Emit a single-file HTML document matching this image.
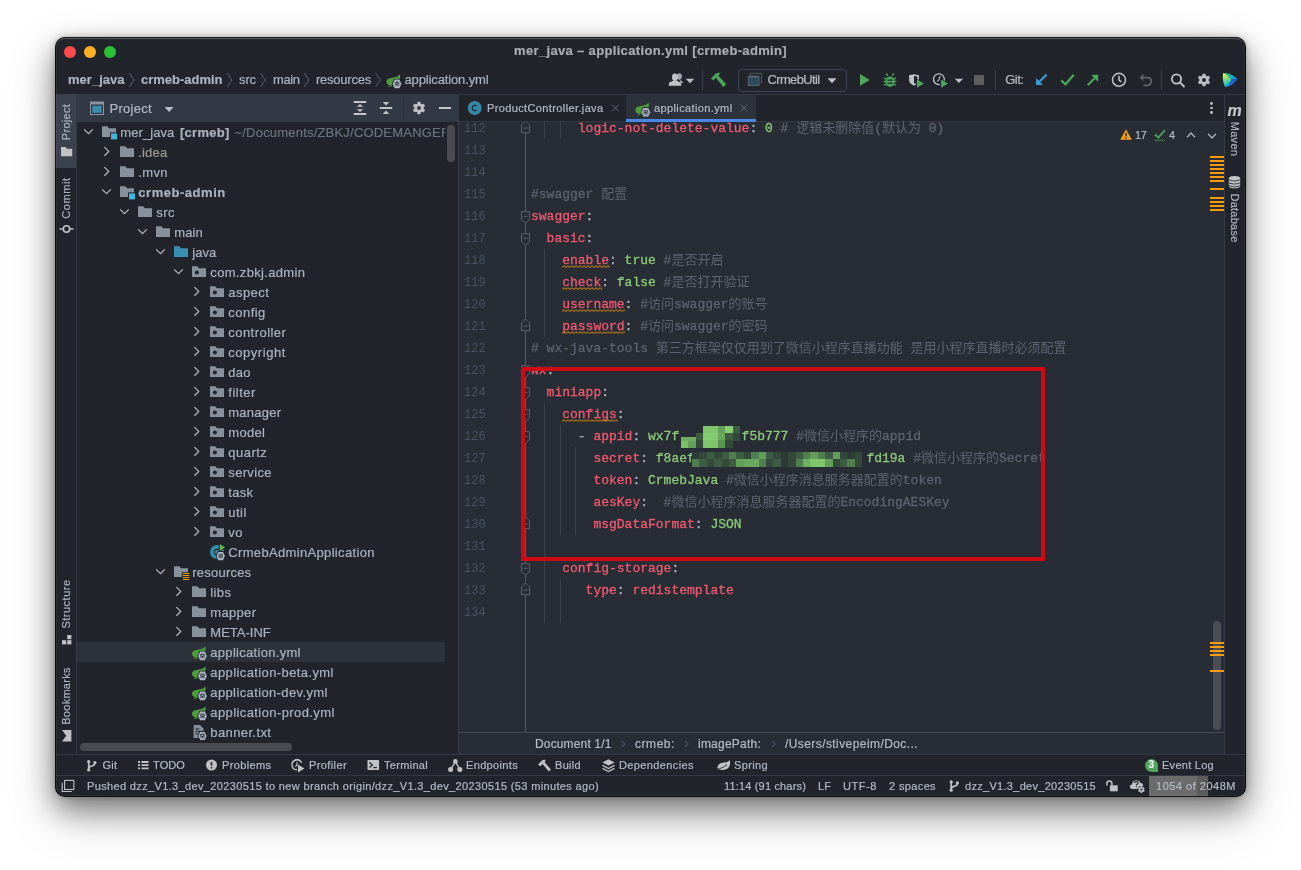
<!DOCTYPE html>
<html lang="zh"><head><meta charset="utf-8"><title>mer_java – application.yml [crmeb-admin]</title>
<style>
html,body{margin:0;padding:0;background:#fff;}
body{width:1301px;height:870px;overflow:hidden;position:relative;font-family:"Liberation Sans", "Noto Sans CJK SC", sans-serif;font-size:13px;}
.a{position:absolute;display:block;}
.t{white-space:pre;-webkit-text-stroke:0.2px currentColor;}
.m{font-family:"Liberation Mono", "Noto Sans CJK SC", monospace;-webkit-text-stroke:0.3px currentColor;}
#w{position:absolute;left:55px;top:37px;width:1190.5px;height:760px;border-radius:10px;overflow:hidden;background:#21252b;}
#sh{position:absolute;left:55px;top:37px;width:1190.5px;height:760px;border-radius:10px;box-shadow:0 0 6px rgba(0,0,0,.25),0 12px 28px rgba(0,0,0,.42),0 20px 50px rgba(0,0,0,.22);}
#o{position:absolute;left:-55px;top:-37px;width:1301px;height:870px;will-change:transform;}
#hl{position:absolute;left:55px;top:37px;width:1190.5px;height:760px;border-radius:10px;box-shadow:inset 0 0 0 1px rgba(0,0,0,.75), inset 0 2px 0 0 rgba(255,255,255,.2), inset 0 0 0 2px rgba(255,255,255,.05);pointer-events:none;}
</style></head><body>
<div id="sh"></div>
<div id="w"><div id="o">
<div class="a" style="left:64px;top:46px;width:12px;height:12px;background:#fd4a4a;border-radius:50%;"></div>
<div class="a" style="left:84px;top:46px;width:12px;height:12px;background:#fdb124;border-radius:50%;"></div>
<div class="a" style="left:104px;top:46px;width:12px;height:12px;background:#2ac034;border-radius:50%;"></div>
<span id="t1" class="a t" style="left:650.5px;top:42.20px;font-size:13px;line-height:18px;color:#a9acb2;font-weight:bold;letter-spacing:0.341px;transform:translateX(-50%);">mer_java – application.yml [crmeb-admin]</span>
<span id="t2" class="a t" style="left:68px;top:70.70px;font-size:13px;line-height:18px;color:#abb2bf;font-weight:bold;letter-spacing:0.014px;">mer_java</span>
<span id="t3" class="a t" style="left:141px;top:70.70px;font-size:13px;line-height:18px;color:#abb2bf;font-weight:bold;letter-spacing:-0.013px;">crmeb-admin</span>
<span id="t4" class="a t" style="left:239px;top:70.70px;font-size:13px;line-height:18px;color:#abb2bf;letter-spacing:-0.115px;">src</span>
<span id="t5" class="a t" style="left:273px;top:70.70px;font-size:13px;line-height:18px;color:#abb2bf;letter-spacing:-0.422px;">main</span>
<span id="t6" class="a t" style="left:316px;top:70.70px;font-size:13px;line-height:18px;color:#abb2bf;letter-spacing:-0.231px;">resources</span>
<span id="t7" class="a t" style="left:404.5px;top:70.70px;font-size:13px;line-height:18px;color:#abb2bf;letter-spacing:-0.133px;">application.yml</span>
<svg class="a" style="left:128px;top:72px;" width="8" height="17" viewBox="0.00 0.00 8 17"><path d="M1.2 1 L5.8 8 L1.2 15" fill="none" stroke="#5a6170" stroke-width="1"/></svg>
<svg class="a" style="left:226px;top:72px;" width="8" height="17" viewBox="0.00 0.00 8 17"><path d="M1.2 1 L5.8 8 L1.2 15" fill="none" stroke="#5a6170" stroke-width="1"/></svg>
<svg class="a" style="left:259px;top:72px;" width="8" height="17" viewBox="-0.50 0.00 8 17"><path d="M1.2 1 L5.8 8 L1.2 15" fill="none" stroke="#5a6170" stroke-width="1"/></svg>
<svg class="a" style="left:303px;top:72px;" width="8" height="17" viewBox="0.00 0.00 8 17"><path d="M1.2 1 L5.8 8 L1.2 15" fill="none" stroke="#5a6170" stroke-width="1"/></svg>
<svg class="a" style="left:374px;top:72px;" width="8" height="17" viewBox="-0.50 0.00 8 17"><path d="M1.2 1 L5.8 8 L1.2 15" fill="none" stroke="#5a6170" stroke-width="1"/></svg>
<div class="a" style="left:55px;top:94px;width:1190px;height:1px;background:#333842;"></div>
<div class="a" style="left:55px;top:94px;width:21px;height:74.2px;background:#3b414d;"></div>
<div class="a" style="left:76px;top:122px;width:1px;height:632px;background:#343944;"></div>
<span id="t8" class="a t" style="left:65.7px;top:114.00px;font-size:11px;line-height:16px;color:#abb2bf;letter-spacing:0.321px;transform:translate(-50%,0) rotate(-90deg);transform-origin:50% 50%;">Project</span>
<span id="t9" class="a t" style="left:65.7px;top:190.00px;font-size:11px;line-height:16px;color:#abb2bf;letter-spacing:0.602px;transform:translate(-50%,0) rotate(-90deg);transform-origin:50% 50%;">Commit</span>
<span id="t10" class="a t" style="left:65.7px;top:596.00px;font-size:11px;line-height:16px;color:#abb2bf;letter-spacing:0.484px;transform:translate(-50%,0) rotate(-90deg);transform-origin:50% 50%;">Structure</span>
<span id="t11" class="a t" style="left:65.7px;top:687.50px;font-size:11px;line-height:16px;color:#abb2bf;letter-spacing:0.274px;transform:translate(-50%,0) rotate(-90deg);transform-origin:50% 50%;">Bookmarks</span>
<div class="a" style="left:76px;top:94px;width:383px;height:28px;background:#323844;"></div>
<span id="t12" class="a t" style="left:109.5px;top:99.70px;font-size:13px;line-height:18px;color:#b4bac5;letter-spacing:0.290px;">Project</span>
<svg class="a" style="left:164px;top:107px;" width="10" height="6" viewBox="-0.60 0.00 10 6"><path d="M0 0 H9 L4.5 5 Z" fill="#bcbfc5"/></svg>
<svg class="a" style="left:83px;top:128px;" width="11" height="8" viewBox="-0.50 -0.40 11 8"><path d="M0.7 1 L5 5.3 L9.3 1" fill="none" stroke="#b0b4bb" stroke-width="1.3"/></svg>
<svg class="a" style="left:101px;top:123px;" width="17" height="17" viewBox="0.00 -0.40 17 17"><path d="M1 2.8 H6.4 L7.9 4.8 H15 V13.5 H1 Z" fill="#87909b"/><rect x="9" y="9" width="7" height="7" fill="#21252b"/><rect x="10" y="10" width="6" height="6" fill="#40b6e0"/></svg>
<span id="t13" class="a t" style="left:120.3px;top:123.70px;font-size:13px;line-height:18px;color:#abb2bf;letter-spacing:0.066px;">mer_java</span>
<span id="t14" class="a t" style="left:180.0px;top:123.70px;font-size:13px;line-height:18px;color:#abb2bf;font-weight:bold;letter-spacing:0.259px;">[crmeb]</span>
<span id="t15" class="a t" style="left:234.5px;top:123.70px;font-size:13px;line-height:18px;color:#6b727f;letter-spacing:0.201px;">~/Documents/ZBKJ/CODEMANGER</span>
<svg class="a" style="left:103px;top:146px;" width="9" height="12" viewBox="-0.10 -0.10 9 12"><path d="M1.3 1 L5.6 5.3 L1.3 9.6" fill="none" stroke="#b0b4bb" stroke-width="1.3"/></svg>
<svg class="a" style="left:119px;top:143px;" width="17" height="17" viewBox="0.00 -0.40 17 17"><path d="M1 2.8 H6.4 L7.9 4.8 H15 V13.5 H1 Z" fill="#87909b"/></svg>
<span id="t16" class="a t" style="left:138.3px;top:143.70px;font-size:13px;line-height:18px;color:#9a9a94;letter-spacing:0.159px;">.idea</span>
<svg class="a" style="left:103px;top:166px;" width="9" height="12" viewBox="-0.10 -0.10 9 12"><path d="M1.3 1 L5.6 5.3 L1.3 9.6" fill="none" stroke="#b0b4bb" stroke-width="1.3"/></svg>
<svg class="a" style="left:119px;top:163px;" width="17" height="17" viewBox="0.00 -0.40 17 17"><path d="M1 2.8 H6.4 L7.9 4.8 H15 V13.5 H1 Z" fill="#87909b"/></svg>
<span id="t17" class="a t" style="left:138.3px;top:163.70px;font-size:13px;line-height:18px;color:#abb2bf;letter-spacing:0.332px;">.mvn</span>
<svg class="a" style="left:101px;top:188px;" width="11" height="8" viewBox="-0.50 -0.40 11 8"><path d="M0.7 1 L5 5.3 L9.3 1" fill="none" stroke="#b0b4bb" stroke-width="1.3"/></svg>
<svg class="a" style="left:119px;top:183px;" width="17" height="17" viewBox="0.00 -0.40 17 17"><path d="M1 2.8 H6.4 L7.9 4.8 H15 V13.5 H1 Z" fill="#87909b"/><rect x="9" y="9" width="7" height="7" fill="#21252b"/><rect x="10" y="10" width="6" height="6" fill="#40b6e0"/></svg>
<span id="t18" class="a t" style="left:138.3px;top:183.70px;font-size:13px;line-height:18px;color:#abb2bf;font-weight:bold;letter-spacing:0.533px;">crmeb-admin</span>
<svg class="a" style="left:119px;top:208px;" width="11" height="8" viewBox="-0.50 -0.40 11 8"><path d="M0.7 1 L5 5.3 L9.3 1" fill="none" stroke="#b0b4bb" stroke-width="1.3"/></svg>
<svg class="a" style="left:137px;top:203px;" width="17" height="17" viewBox="0.00 -0.40 17 17"><path d="M1 2.8 H6.4 L7.9 4.8 H15 V13.5 H1 Z" fill="#87909b"/></svg>
<span id="t19" class="a t" style="left:156.3px;top:203.70px;font-size:13px;line-height:18px;color:#abb2bf;letter-spacing:0.385px;">src</span>
<svg class="a" style="left:137px;top:228px;" width="11" height="8" viewBox="-0.50 -0.40 11 8"><path d="M0.7 1 L5 5.3 L9.3 1" fill="none" stroke="#b0b4bb" stroke-width="1.3"/></svg>
<svg class="a" style="left:155px;top:223px;" width="17" height="17" viewBox="0.00 -0.40 17 17"><path d="M1 2.8 H6.4 L7.9 4.8 H15 V13.5 H1 Z" fill="#87909b"/></svg>
<span id="t20" class="a t" style="left:174.3px;top:223.70px;font-size:13px;line-height:18px;color:#abb2bf;letter-spacing:0.078px;">main</span>
<svg class="a" style="left:155px;top:248px;" width="11" height="8" viewBox="-0.50 -0.40 11 8"><path d="M0.7 1 L5 5.3 L9.3 1" fill="none" stroke="#b0b4bb" stroke-width="1.3"/></svg>
<svg class="a" style="left:173px;top:243px;" width="17" height="17" viewBox="0.00 -0.40 17 17"><path d="M1 2.8 H6.4 L7.9 4.8 H15 V13.5 H1 Z" fill="#3a8fb0"/></svg>
<span id="t21" class="a t" style="left:192.3px;top:243.70px;font-size:13px;line-height:18px;color:#abb2bf;letter-spacing:0.035px;">java</span>
<svg class="a" style="left:173px;top:268px;" width="11" height="8" viewBox="-0.50 -0.40 11 8"><path d="M0.7 1 L5 5.3 L9.3 1" fill="none" stroke="#b0b4bb" stroke-width="1.3"/></svg>
<svg class="a" style="left:191px;top:263px;" width="17" height="17" viewBox="0.00 -0.40 17 17"><path d="M1 2.8 H6.4 L7.9 4.8 H15 V13.5 H1 Z" fill="#87909b"/><circle cx="5.9" cy="9" r="2" fill="#21252b"/></svg>
<span id="t22" class="a t" style="left:210.3px;top:263.70px;font-size:13px;line-height:18px;color:#abb2bf;letter-spacing:0.335px;">com.zbkj.admin</span>
<svg class="a" style="left:193px;top:286px;" width="9" height="12" viewBox="-0.10 -0.10 9 12"><path d="M1.3 1 L5.6 5.3 L1.3 9.6" fill="none" stroke="#b0b4bb" stroke-width="1.3"/></svg>
<svg class="a" style="left:209px;top:283px;" width="17" height="17" viewBox="0.00 -0.40 17 17"><path d="M1 2.8 H6.4 L7.9 4.8 H15 V13.5 H1 Z" fill="#87909b"/><circle cx="5.9" cy="9" r="2" fill="#21252b"/></svg>
<span id="t23" class="a t" style="left:228.3px;top:283.70px;font-size:13px;line-height:18px;color:#abb2bf;letter-spacing:0.448px;">aspect</span>
<svg class="a" style="left:193px;top:306px;" width="9" height="12" viewBox="-0.10 -0.10 9 12"><path d="M1.3 1 L5.6 5.3 L1.3 9.6" fill="none" stroke="#b0b4bb" stroke-width="1.3"/></svg>
<svg class="a" style="left:209px;top:303px;" width="17" height="17" viewBox="0.00 -0.40 17 17"><path d="M1 2.8 H6.4 L7.9 4.8 H15 V13.5 H1 Z" fill="#87909b"/><circle cx="5.9" cy="9" r="2" fill="#21252b"/></svg>
<span id="t24" class="a t" style="left:228.3px;top:303.70px;font-size:13px;line-height:18px;color:#abb2bf;letter-spacing:0.466px;">config</span>
<svg class="a" style="left:193px;top:326px;" width="9" height="12" viewBox="-0.10 -0.10 9 12"><path d="M1.3 1 L5.6 5.3 L1.3 9.6" fill="none" stroke="#b0b4bb" stroke-width="1.3"/></svg>
<svg class="a" style="left:209px;top:323px;" width="17" height="17" viewBox="0.00 -0.40 17 17"><path d="M1 2.8 H6.4 L7.9 4.8 H15 V13.5 H1 Z" fill="#87909b"/><circle cx="5.9" cy="9" r="2" fill="#21252b"/></svg>
<span id="t25" class="a t" style="left:228.3px;top:323.70px;font-size:13px;line-height:18px;color:#abb2bf;letter-spacing:0.453px;">controller</span>
<svg class="a" style="left:193px;top:346px;" width="9" height="12" viewBox="-0.10 -0.10 9 12"><path d="M1.3 1 L5.6 5.3 L1.3 9.6" fill="none" stroke="#b0b4bb" stroke-width="1.3"/></svg>
<svg class="a" style="left:209px;top:343px;" width="17" height="17" viewBox="0.00 -0.40 17 17"><path d="M1 2.8 H6.4 L7.9 4.8 H15 V13.5 H1 Z" fill="#87909b"/><circle cx="5.9" cy="9" r="2" fill="#21252b"/></svg>
<span id="t26" class="a t" style="left:228.3px;top:343.70px;font-size:13px;line-height:18px;color:#abb2bf;letter-spacing:0.528px;">copyright</span>
<svg class="a" style="left:193px;top:366px;" width="9" height="12" viewBox="-0.10 -0.10 9 12"><path d="M1.3 1 L5.6 5.3 L1.3 9.6" fill="none" stroke="#b0b4bb" stroke-width="1.3"/></svg>
<svg class="a" style="left:209px;top:363px;" width="17" height="17" viewBox="0.00 -0.40 17 17"><path d="M1 2.8 H6.4 L7.9 4.8 H15 V13.5 H1 Z" fill="#87909b"/><circle cx="5.9" cy="9" r="2" fill="#21252b"/></svg>
<span id="t27" class="a t" style="left:228.3px;top:363.70px;font-size:13px;line-height:18px;color:#abb2bf;letter-spacing:0.266px;">dao</span>
<svg class="a" style="left:193px;top:386px;" width="9" height="12" viewBox="-0.10 -0.10 9 12"><path d="M1.3 1 L5.6 5.3 L1.3 9.6" fill="none" stroke="#b0b4bb" stroke-width="1.3"/></svg>
<svg class="a" style="left:209px;top:383px;" width="17" height="17" viewBox="0.00 -0.40 17 17"><path d="M1 2.8 H6.4 L7.9 4.8 H15 V13.5 H1 Z" fill="#87909b"/><circle cx="5.9" cy="9" r="2" fill="#21252b"/></svg>
<span id="t28" class="a t" style="left:228.3px;top:383.70px;font-size:13px;line-height:18px;color:#abb2bf;letter-spacing:0.490px;">filter</span>
<svg class="a" style="left:193px;top:406px;" width="9" height="12" viewBox="-0.10 -0.10 9 12"><path d="M1.3 1 L5.6 5.3 L1.3 9.6" fill="none" stroke="#b0b4bb" stroke-width="1.3"/></svg>
<svg class="a" style="left:209px;top:403px;" width="17" height="17" viewBox="0.00 -0.40 17 17"><path d="M1 2.8 H6.4 L7.9 4.8 H15 V13.5 H1 Z" fill="#87909b"/><circle cx="5.9" cy="9" r="2" fill="#21252b"/></svg>
<span id="t29" class="a t" style="left:228.3px;top:403.70px;font-size:13px;line-height:18px;color:#abb2bf;letter-spacing:0.241px;">manager</span>
<svg class="a" style="left:193px;top:426px;" width="9" height="12" viewBox="-0.10 -0.10 9 12"><path d="M1.3 1 L5.6 5.3 L1.3 9.6" fill="none" stroke="#b0b4bb" stroke-width="1.3"/></svg>
<svg class="a" style="left:209px;top:423px;" width="17" height="17" viewBox="0.00 -0.40 17 17"><path d="M1 2.8 H6.4 L7.9 4.8 H15 V13.5 H1 Z" fill="#87909b"/><circle cx="5.9" cy="9" r="2" fill="#21252b"/></svg>
<span id="t30" class="a t" style="left:228.3px;top:423.70px;font-size:13px;line-height:18px;color:#abb2bf;letter-spacing:0.316px;">model</span>
<svg class="a" style="left:193px;top:446px;" width="9" height="12" viewBox="-0.10 -0.10 9 12"><path d="M1.3 1 L5.6 5.3 L1.3 9.6" fill="none" stroke="#b0b4bb" stroke-width="1.3"/></svg>
<svg class="a" style="left:209px;top:443px;" width="17" height="17" viewBox="0.00 -0.40 17 17"><path d="M1 2.8 H6.4 L7.9 4.8 H15 V13.5 H1 Z" fill="#87909b"/><circle cx="5.9" cy="9" r="2" fill="#21252b"/></svg>
<span id="t31" class="a t" style="left:228.3px;top:443.70px;font-size:13px;line-height:18px;color:#abb2bf;letter-spacing:0.477px;">quartz</span>
<svg class="a" style="left:193px;top:466px;" width="9" height="12" viewBox="-0.10 -0.10 9 12"><path d="M1.3 1 L5.6 5.3 L1.3 9.6" fill="none" stroke="#b0b4bb" stroke-width="1.3"/></svg>
<svg class="a" style="left:209px;top:463px;" width="17" height="17" viewBox="0.00 -0.40 17 17"><path d="M1 2.8 H6.4 L7.9 4.8 H15 V13.5 H1 Z" fill="#87909b"/><circle cx="5.9" cy="9" r="2" fill="#21252b"/></svg>
<span id="t32" class="a t" style="left:228.3px;top:463.70px;font-size:13px;line-height:18px;color:#abb2bf;letter-spacing:0.330px;">service</span>
<svg class="a" style="left:193px;top:486px;" width="9" height="12" viewBox="-0.10 -0.10 9 12"><path d="M1.3 1 L5.6 5.3 L1.3 9.6" fill="none" stroke="#b0b4bb" stroke-width="1.3"/></svg>
<svg class="a" style="left:209px;top:483px;" width="17" height="17" viewBox="0.00 -0.40 17 17"><path d="M1 2.8 H6.4 L7.9 4.8 H15 V13.5 H1 Z" fill="#87909b"/><circle cx="5.9" cy="9" r="2" fill="#21252b"/></svg>
<span id="t33" class="a t" style="left:228.3px;top:483.70px;font-size:13px;line-height:18px;color:#abb2bf;letter-spacing:0.289px;">task</span>
<svg class="a" style="left:193px;top:506px;" width="9" height="12" viewBox="-0.10 -0.10 9 12"><path d="M1.3 1 L5.6 5.3 L1.3 9.6" fill="none" stroke="#b0b4bb" stroke-width="1.3"/></svg>
<svg class="a" style="left:209px;top:503px;" width="17" height="17" viewBox="0.00 -0.40 17 17"><path d="M1 2.8 H6.4 L7.9 4.8 H15 V13.5 H1 Z" fill="#87909b"/><circle cx="5.9" cy="9" r="2" fill="#21252b"/></svg>
<span id="t34" class="a t" style="left:228.3px;top:503.70px;font-size:13px;line-height:18px;color:#abb2bf;letter-spacing:0.469px;">util</span>
<svg class="a" style="left:193px;top:526px;" width="9" height="12" viewBox="-0.10 -0.10 9 12"><path d="M1.3 1 L5.6 5.3 L1.3 9.6" fill="none" stroke="#b0b4bb" stroke-width="1.3"/></svg>
<svg class="a" style="left:209px;top:523px;" width="17" height="17" viewBox="0.00 -0.40 17 17"><path d="M1 2.8 H6.4 L7.9 4.8 H15 V13.5 H1 Z" fill="#87909b"/><circle cx="5.9" cy="9" r="2" fill="#21252b"/></svg>
<span id="t35" class="a t" style="left:228.3px;top:523.70px;font-size:13px;line-height:18px;color:#abb2bf;letter-spacing:0.383px;">vo</span>
<svg class="a" style="left:209px;top:543px;" width="18" height="18" viewBox="0.00 -0.40 18 18"><circle cx="8" cy="8.6" r="7" fill="#348db0"/><path d="M10.2 6.6 A2.9 2.9 0 1 0 10.2 10.6" fill="none" stroke="#21252b" stroke-width="1.1"/><path d="M9.9 -0.6 L17.4 4.1 L9.9 8.8 Z" fill="#21252b"/><path d="M10.8 0.7 L16.1 4.1 L10.8 7.5 Z" fill="#62b543"/><path d="M6.60 12.70 L8.89 7.70 H14.50 L16.80 12.70 L14.50 17.70 H8.89 Z" fill="#21252b"/><path d="M7.50 12.70 L9.39 8.60 H14.01 L15.90 12.70 L14.01 16.80 H9.39 Z" fill="#a9b5bf"/><circle cx="11.7" cy="12.7" r="2.45" fill="#21252b"/><path d="M10.60 11.80 A1.55 1.55 0 1 0 12.80 11.80" fill="none" stroke="#a9b5bf" stroke-width="0.85"/><path d="M11.7 10.50 V12.80" stroke="#a9b5bf" stroke-width="0.85"/></svg>
<span id="t36" class="a t" style="left:228.3px;top:543.70px;font-size:13px;line-height:18px;color:#abb2bf;letter-spacing:0.336px;">CrmebAdminApplication</span>
<svg class="a" style="left:155px;top:568px;" width="11" height="8" viewBox="-0.50 -0.40 11 8"><path d="M0.7 1 L5 5.3 L9.3 1" fill="none" stroke="#b0b4bb" stroke-width="1.3"/></svg>
<svg class="a" style="left:173px;top:563px;" width="18" height="18" viewBox="0.00 -0.40 18 18"><path d="M1 2.8 H6.4 L7.9 4.8 H15 V13.5 H1 Z" fill="#87909b"/><rect x="8.8" y="8.8" width="8.2" height="8.2" fill="#21252b"/><path d="M9.8 10.1h6.5M9.8 12.1h6.5M9.8 14.1h6.5M9.8 16.1h6.5" stroke="#eda200" stroke-width="1.1"/></svg>
<span id="t37" class="a t" style="left:192.3px;top:563.70px;font-size:13px;line-height:18px;color:#abb2bf;letter-spacing:0.214px;">resources</span>
<svg class="a" style="left:175px;top:586px;" width="9" height="12" viewBox="-0.10 -0.10 9 12"><path d="M1.3 1 L5.6 5.3 L1.3 9.6" fill="none" stroke="#b0b4bb" stroke-width="1.3"/></svg>
<svg class="a" style="left:191px;top:583px;" width="17" height="17" viewBox="0.00 -0.40 17 17"><path d="M1 2.8 H6.4 L7.9 4.8 H15 V13.5 H1 Z" fill="#87909b"/></svg>
<span id="t38" class="a t" style="left:210.3px;top:583.70px;font-size:13px;line-height:18px;color:#abb2bf;letter-spacing:0.371px;">libs</span>
<svg class="a" style="left:175px;top:606px;" width="9" height="12" viewBox="-0.10 -0.10 9 12"><path d="M1.3 1 L5.6 5.3 L1.3 9.6" fill="none" stroke="#b0b4bb" stroke-width="1.3"/></svg>
<svg class="a" style="left:191px;top:603px;" width="17" height="17" viewBox="0.00 -0.40 17 17"><path d="M1 2.8 H6.4 L7.9 4.8 H15 V13.5 H1 Z" fill="#87909b"/></svg>
<span id="t39" class="a t" style="left:210.3px;top:603.70px;font-size:13px;line-height:18px;color:#abb2bf;letter-spacing:0.320px;">mapper</span>
<svg class="a" style="left:175px;top:626px;" width="9" height="12" viewBox="-0.10 -0.10 9 12"><path d="M1.3 1 L5.6 5.3 L1.3 9.6" fill="none" stroke="#b0b4bb" stroke-width="1.3"/></svg>
<svg class="a" style="left:191px;top:623px;" width="17" height="17" viewBox="0.00 -0.40 17 17"><path d="M1 2.8 H6.4 L7.9 4.8 H15 V13.5 H1 Z" fill="#87909b"/></svg>
<span id="t40" class="a t" style="left:210.3px;top:623.70px;font-size:13px;line-height:18px;color:#abb2bf;letter-spacing:0.010px;">META-INF</span>
<div class="a" style="left:77px;top:642px;width:368px;height:20px;background:#2c313a;"></div>
<svg class="a" style="left:191px;top:644px;" width="17" height="17" viewBox="0.00 0.00 17 17"><path d="M14.4 2.2 C14.9 4.5 14.6 7 13.6 9 L8 13.2 C6 14.2 3 13.7 1.6 11.7 C0.4 9.7 1 7.3 4 6.3 C8 5.1 12.4 5.4 14.4 2.2 Z" fill="#4f9c3d"/><path d="M3 14.6 C4.6 14.7 5.8 14.2 6.8 13" fill="none" stroke="#468a36" stroke-width="1"/><path d="M6.20 11.90 L8.58 6.70 H14.42 L16.80 11.90 L14.42 17.10 H8.58 Z" fill="#21252b"/><path d="M7.10 11.90 L9.08 7.60 H13.92 L15.90 11.90 L13.92 16.20 H9.08 Z" fill="#a9b5bf"/><circle cx="11.5" cy="11.9" r="2.45" fill="#21252b"/><path d="M10.40 11.00 A1.55 1.55 0 1 0 12.60 11.00" fill="none" stroke="#a9b5bf" stroke-width="0.85"/><path d="M11.5 9.70 V12.00" stroke="#a9b5bf" stroke-width="0.85"/></svg>
<span id="t41" class="a t" style="left:210.3px;top:643.70px;font-size:13px;line-height:18px;color:#abb2bf;letter-spacing:0.300px;">application.yml</span>
<svg class="a" style="left:191px;top:664px;" width="17" height="17" viewBox="0.00 0.00 17 17"><path d="M14.4 2.2 C14.9 4.5 14.6 7 13.6 9 L8 13.2 C6 14.2 3 13.7 1.6 11.7 C0.4 9.7 1 7.3 4 6.3 C8 5.1 12.4 5.4 14.4 2.2 Z" fill="#4f9c3d"/><path d="M3 14.6 C4.6 14.7 5.8 14.2 6.8 13" fill="none" stroke="#468a36" stroke-width="1"/><path d="M6.20 11.90 L8.58 6.70 H14.42 L16.80 11.90 L14.42 17.10 H8.58 Z" fill="#21252b"/><path d="M7.10 11.90 L9.08 7.60 H13.92 L15.90 11.90 L13.92 16.20 H9.08 Z" fill="#a9b5bf"/><circle cx="11.5" cy="11.9" r="2.45" fill="#21252b"/><path d="M10.40 11.00 A1.55 1.55 0 1 0 12.60 11.00" fill="none" stroke="#a9b5bf" stroke-width="0.85"/><path d="M11.5 9.70 V12.00" stroke="#a9b5bf" stroke-width="0.85"/></svg>
<span id="t42" class="a t" style="left:210.3px;top:663.70px;font-size:13px;line-height:18px;color:#abb2bf;letter-spacing:0.394px;">application-beta.yml</span>
<svg class="a" style="left:191px;top:684px;" width="17" height="17" viewBox="0.00 0.00 17 17"><path d="M14.4 2.2 C14.9 4.5 14.6 7 13.6 9 L8 13.2 C6 14.2 3 13.7 1.6 11.7 C0.4 9.7 1 7.3 4 6.3 C8 5.1 12.4 5.4 14.4 2.2 Z" fill="#4f9c3d"/><path d="M3 14.6 C4.6 14.7 5.8 14.2 6.8 13" fill="none" stroke="#468a36" stroke-width="1"/><path d="M6.20 11.90 L8.58 6.70 H14.42 L16.80 11.90 L14.42 17.10 H8.58 Z" fill="#21252b"/><path d="M7.10 11.90 L9.08 7.60 H13.92 L15.90 11.90 L13.92 16.20 H9.08 Z" fill="#a9b5bf"/><circle cx="11.5" cy="11.9" r="2.45" fill="#21252b"/><path d="M10.40 11.00 A1.55 1.55 0 1 0 12.60 11.00" fill="none" stroke="#a9b5bf" stroke-width="0.85"/><path d="M11.5 9.70 V12.00" stroke="#a9b5bf" stroke-width="0.85"/></svg>
<span id="t43" class="a t" style="left:210.3px;top:683.70px;font-size:13px;line-height:18px;color:#abb2bf;letter-spacing:0.378px;">application-dev.yml</span>
<svg class="a" style="left:191px;top:704px;" width="17" height="17" viewBox="0.00 0.00 17 17"><path d="M14.4 2.2 C14.9 4.5 14.6 7 13.6 9 L8 13.2 C6 14.2 3 13.7 1.6 11.7 C0.4 9.7 1 7.3 4 6.3 C8 5.1 12.4 5.4 14.4 2.2 Z" fill="#4f9c3d"/><path d="M3 14.6 C4.6 14.7 5.8 14.2 6.8 13" fill="none" stroke="#468a36" stroke-width="1"/><path d="M6.20 11.90 L8.58 6.70 H14.42 L16.80 11.90 L14.42 17.10 H8.58 Z" fill="#21252b"/><path d="M7.10 11.90 L9.08 7.60 H13.92 L15.90 11.90 L13.92 16.20 H9.08 Z" fill="#a9b5bf"/><circle cx="11.5" cy="11.9" r="2.45" fill="#21252b"/><path d="M10.40 11.00 A1.55 1.55 0 1 0 12.60 11.00" fill="none" stroke="#a9b5bf" stroke-width="0.85"/><path d="M11.5 9.70 V12.00" stroke="#a9b5bf" stroke-width="0.85"/></svg>
<span id="t44" class="a t" style="left:210.3px;top:703.70px;font-size:13px;line-height:18px;color:#abb2bf;letter-spacing:0.408px;">application-prod.yml</span>
<svg class="a" style="left:191px;top:723px;" width="18" height="18" viewBox="0.00 -0.40 18 18"><path d="M2.6 1.6 H9 L12.4 5 V14.6 H2.6 Z" fill="#87909b"/><path d="M4.4 5.6h4M4.4 8h6M4.4 10.4h3" stroke="#21252b" stroke-width="1"/><path d="M6.50 12.60 L8.75 7.70 H14.25 L16.50 12.60 L14.25 17.50 H8.75 Z" fill="#21252b"/><path d="M7.40 12.60 L9.25 8.60 H13.75 L15.60 12.60 L13.75 16.60 H9.25 Z" fill="#a9b5bf"/><circle cx="11.5" cy="12.6" r="2.45" fill="#21252b"/><path d="M10.40 11.70 A1.55 1.55 0 1 0 12.60 11.70" fill="none" stroke="#a9b5bf" stroke-width="0.85"/><path d="M11.5 10.40 V12.70" stroke="#a9b5bf" stroke-width="0.85"/></svg>
<span id="t45" class="a t" style="left:210.3px;top:723.70px;font-size:13px;line-height:18px;color:#abb2bf;letter-spacing:0.389px;">banner.txt</span>
<div class="a" style="left:445px;top:122px;width:13px;height:20px;background:#21252b;"></div>
<div class="a" style="left:447.3px;top:125px;width:7.4px;height:37px;background:#4a4b50;border-radius:3.7px;"></div>
<div class="a" style="left:80px;top:743px;width:211.5px;height:7.5px;background:#4a4b50;border-radius:4px;"></div>
<div class="a" style="left:458px;top:95px;width:1px;height:659px;background:#363b46;"></div>
<div class="a" style="left:459px;top:95px;width:765px;height:26px;background:#21252b;"></div>
<div class="a" style="left:459px;top:121px;width:765px;height:1px;background:#333842;"></div>
<div class="a" style="left:459px;top:122px;width:765px;height:632px;background:#282c34;"></div>
<div class="a" style="left:626px;top:95px;width:130px;height:24px;background:#2c313a;"></div>
<div class="a" style="left:626px;top:118.5px;width:130px;height:3px;background:#4a88e8;"></div>
<svg class="a" style="left:467px;top:101px;" width="15" height="15" viewBox="-0.70 0.00 15 15"><circle cx="7" cy="7" r="6.9" fill="#3587a3"/><path d="M8.9 5.2 A2.6 2.6 0 1 0 8.9 8.8" fill="none" stroke="#21252b" stroke-width="1.1"/></svg>
<span id="t46" class="a t" style="left:487px;top:100.00px;font-size:11px;line-height:16px;color:#b4bac5;letter-spacing:0.376px;">ProductController.java</span>
<span id="t47" class="a t" style="left:654px;top:100.00px;font-size:11px;line-height:16px;color:#b4bac5;letter-spacing:0.382px;">application.yml</span>
<svg class="a" style="left:611px;top:104px;" width="9" height="9" viewBox="-0.50 0.00 9 9"><path d="M0.8 0.8 L7.2 7.2 M7.2 0.8 L0.8 7.2" stroke="#5f6673" stroke-width="1"/></svg>
<svg class="a" style="left:740px;top:104px;" width="9" height="9" viewBox="0.00 0.00 9 9"><path d="M0.8 0.8 L7.2 7.2 M7.2 0.8 L0.8 7.2" stroke="#5f6673" stroke-width="1"/></svg>
<svg class="a" style="left:634px;top:100px;" width="17" height="17" viewBox="-0.30 -0.30 17 17"><path d="M14.4 2.2 C14.9 4.5 14.6 7 13.6 9 L8 13.2 C6 14.2 3 13.7 1.6 11.7 C0.4 9.7 1 7.3 4 6.3 C8 5.1 12.4 5.4 14.4 2.2 Z" fill="#4f9c3d"/><path d="M3 14.6 C4.6 14.7 5.8 14.2 6.8 13" fill="none" stroke="#468a36" stroke-width="1"/><path d="M6.20 11.90 L8.58 6.70 H14.42 L16.80 11.90 L14.42 17.10 H8.58 Z" fill="#2c313a"/><path d="M7.10 11.90 L9.08 7.60 H13.92 L15.90 11.90 L13.92 16.20 H9.08 Z" fill="#a9b5bf"/><circle cx="11.5" cy="11.9" r="2.45" fill="#2c313a"/><path d="M10.40 11.00 A1.55 1.55 0 1 0 12.60 11.00" fill="none" stroke="#a9b5bf" stroke-width="0.85"/><path d="M11.5 9.70 V12.00" stroke="#a9b5bf" stroke-width="0.85"/></svg>
<div class="a" style="left:1210.4px;top:102.1px;width:2.8px;height:2.8px;background:#b9bcc2;border-radius:50%;"></div>
<div class="a" style="left:1210.4px;top:106.6px;width:2.8px;height:2.8px;background:#b9bcc2;border-radius:50%;"></div>
<div class="a" style="left:1210.4px;top:111.1px;width:2.8px;height:2.8px;background:#b9bcc2;border-radius:50%;"></div>
<div class="a" style="left:525px;top:122px;width:1px;height:611px;background:#545b68;"></div>
<div class="a" style="left:544px;top:122px;width:1px;height:16.5px;background:#3b4048;"></div>
<div class="a" style="left:560px;top:122px;width:1px;height:16.5px;background:#3b4048;"></div>
<div class="a" style="left:544px;top:248.5px;width:1px;height:88.0px;background:#3b4048;"></div>
<div class="a" style="left:544px;top:402.5px;width:1px;height:220.0px;background:#3b4048;"></div>
<div class="a" style="left:560px;top:424.5px;width:1px;height:110.0px;background:#3b4048;"></div>
<div class="a" style="left:575px;top:446.5px;width:1px;height:88.0px;background:#3b4048;"></div>
<div class="a" style="left:560px;top:578.5px;width:1px;height:44.0px;background:#3b4048;"></div>
<span id="t48" class="a t m" style="left:464px;top:117.80px;font-size:12px;line-height:22px;color:#495162;-webkit-text-stroke:0;">112</span>
<span id="t49" class="a t m" style="left:464px;top:139.80px;font-size:12px;line-height:22px;color:#495162;-webkit-text-stroke:0;">113</span>
<span id="t50" class="a t m" style="left:464px;top:161.80px;font-size:12px;line-height:22px;color:#495162;-webkit-text-stroke:0;">114</span>
<span id="t51" class="a t m" style="left:464px;top:183.80px;font-size:12px;line-height:22px;color:#495162;-webkit-text-stroke:0;">115</span>
<span id="t52" class="a t m" style="left:464px;top:205.80px;font-size:12px;line-height:22px;color:#495162;-webkit-text-stroke:0;">116</span>
<span id="t53" class="a t m" style="left:464px;top:227.80px;font-size:12px;line-height:22px;color:#495162;-webkit-text-stroke:0;">117</span>
<span id="t54" class="a t m" style="left:464px;top:249.80px;font-size:12px;line-height:22px;color:#495162;-webkit-text-stroke:0;">118</span>
<span id="t55" class="a t m" style="left:464px;top:271.80px;font-size:12px;line-height:22px;color:#495162;-webkit-text-stroke:0;">119</span>
<span id="t56" class="a t m" style="left:464px;top:293.80px;font-size:12px;line-height:22px;color:#495162;-webkit-text-stroke:0;">120</span>
<span id="t57" class="a t m" style="left:464px;top:315.80px;font-size:12px;line-height:22px;color:#495162;-webkit-text-stroke:0;">121</span>
<span id="t58" class="a t m" style="left:464px;top:337.80px;font-size:12px;line-height:22px;color:#495162;-webkit-text-stroke:0;">122</span>
<span id="t59" class="a t m" style="left:464px;top:359.80px;font-size:12px;line-height:22px;color:#495162;-webkit-text-stroke:0;">123</span>
<span id="t60" class="a t m" style="left:464px;top:381.80px;font-size:12px;line-height:22px;color:#495162;-webkit-text-stroke:0;">124</span>
<span id="t61" class="a t m" style="left:464px;top:403.80px;font-size:12px;line-height:22px;color:#495162;-webkit-text-stroke:0;">125</span>
<span id="t62" class="a t m" style="left:464px;top:425.80px;font-size:12px;line-height:22px;color:#495162;-webkit-text-stroke:0;">126</span>
<span id="t63" class="a t m" style="left:464px;top:447.80px;font-size:12px;line-height:22px;color:#495162;-webkit-text-stroke:0;">127</span>
<span id="t64" class="a t m" style="left:464px;top:469.80px;font-size:12px;line-height:22px;color:#495162;-webkit-text-stroke:0;">128</span>
<span id="t65" class="a t m" style="left:464px;top:491.80px;font-size:12px;line-height:22px;color:#495162;-webkit-text-stroke:0;">129</span>
<span id="t66" class="a t m" style="left:464px;top:513.80px;font-size:12px;line-height:22px;color:#495162;-webkit-text-stroke:0;">130</span>
<span id="t67" class="a t m" style="left:464px;top:535.80px;font-size:12px;line-height:22px;color:#495162;-webkit-text-stroke:0;">131</span>
<span id="t68" class="a t m" style="left:464px;top:557.80px;font-size:12px;line-height:22px;color:#495162;-webkit-text-stroke:0;">132</span>
<span id="t69" class="a t m" style="left:464px;top:579.80px;font-size:12px;line-height:22px;color:#495162;-webkit-text-stroke:0;">133</span>
<span id="t70" class="a t m" style="left:464px;top:601.80px;font-size:12px;line-height:22px;color:#495162;-webkit-text-stroke:0;">134</span>
<span id="t71" class="a t m" style="left:577.8px;top:117.75px;font-size:13px;line-height:22px;color:#ee5a70;letter-spacing:0;">logic-not-delete-value</span>
<span id="t72" class="a t m" style="left:749.4px;top:117.75px;font-size:13px;line-height:22px;color:#abb2bf;letter-spacing:0;">:</span>
<span id="t73" class="a t m" style="left:765.0px;top:117.75px;font-size:13px;line-height:22px;color:#8cc97a;letter-spacing:0;">0</span>
<span id="t74" class="a t m" style="left:780.6px;top:117.75px;font-size:13px;line-height:22px;color:#5c6370;letter-spacing:0;"># </span>
<span id="t75" class="a t m" style="left:796.2px;top:117.75px;font-size:13px;line-height:22px;color:#5c6370;letter-spacing:0;-webkit-text-stroke:0;">逻辑未删除值</span>
<span id="t76" class="a t m" style="left:874.2px;top:117.75px;font-size:13px;line-height:22px;color:#5c6370;letter-spacing:0;">(</span>
<span id="t77" class="a t m" style="left:882.0px;top:117.75px;font-size:13px;line-height:22px;color:#5c6370;letter-spacing:0;-webkit-text-stroke:0;">默认为</span>
<span id="t78" class="a t m" style="left:921.0px;top:117.75px;font-size:13px;line-height:22px;color:#5c6370;letter-spacing:0;"> 0)</span>
<span id="t79" class="a t m" style="left:531.0px;top:183.75px;font-size:13px;line-height:22px;color:#5c6370;letter-spacing:0;">#swagger </span>
<span id="t80" class="a t m" style="left:601.2px;top:183.75px;font-size:13px;line-height:22px;color:#5c6370;letter-spacing:0;-webkit-text-stroke:0;">配置</span>
<span id="t81" class="a t m" style="left:531.0px;top:205.75px;font-size:13px;line-height:22px;color:#ee5a70;letter-spacing:0;">swagger</span>
<span id="t82" class="a t m" style="left:585.6px;top:205.75px;font-size:13px;line-height:22px;color:#abb2bf;letter-spacing:0;">:</span>
<span id="t83" class="a t m" style="left:546.6px;top:227.75px;font-size:13px;line-height:22px;color:#ee5a70;letter-spacing:0;">basic</span>
<span id="t84" class="a t m" style="left:585.6px;top:227.75px;font-size:13px;line-height:22px;color:#abb2bf;letter-spacing:0;">:</span>
<span id="t85" class="a t m" style="left:562.2px;top:249.75px;font-size:13px;line-height:22px;color:#ee5a70;letter-spacing:0;">enable</span>
<span id="t86" class="a t m" style="left:609.0px;top:249.75px;font-size:13px;line-height:22px;color:#abb2bf;letter-spacing:0;">:</span>
<span id="t87" class="a t m" style="left:624.6px;top:249.75px;font-size:13px;line-height:22px;color:#8cc97a;letter-spacing:0;">true</span>
<span id="t88" class="a t m" style="left:663.6px;top:249.75px;font-size:13px;line-height:22px;color:#5c6370;letter-spacing:0;">#</span>
<span id="t89" class="a t m" style="left:671.4px;top:249.75px;font-size:13px;line-height:22px;color:#5c6370;letter-spacing:0;-webkit-text-stroke:0;">是否开启</span>
<span id="t90" class="a t m" style="left:562.2px;top:271.75px;font-size:13px;line-height:22px;color:#ee5a70;letter-spacing:0;">check</span>
<span id="t91" class="a t m" style="left:601.2px;top:271.75px;font-size:13px;line-height:22px;color:#abb2bf;letter-spacing:0;">:</span>
<span id="t92" class="a t m" style="left:616.8px;top:271.75px;font-size:13px;line-height:22px;color:#8cc97a;letter-spacing:0;">false</span>
<span id="t93" class="a t m" style="left:663.6px;top:271.75px;font-size:13px;line-height:22px;color:#5c6370;letter-spacing:0;">#</span>
<span id="t94" class="a t m" style="left:671.4px;top:271.75px;font-size:13px;line-height:22px;color:#5c6370;letter-spacing:0;-webkit-text-stroke:0;">是否打开验证</span>
<span id="t95" class="a t m" style="left:562.2px;top:293.75px;font-size:13px;line-height:22px;color:#ee5a70;letter-spacing:0;">username</span>
<span id="t96" class="a t m" style="left:624.6px;top:293.75px;font-size:13px;line-height:22px;color:#abb2bf;letter-spacing:0;">:</span>
<span id="t97" class="a t m" style="left:640.2px;top:293.75px;font-size:13px;line-height:22px;color:#5c6370;letter-spacing:0;">#</span>
<span id="t98" class="a t m" style="left:648.0px;top:293.75px;font-size:13px;line-height:22px;color:#5c6370;letter-spacing:0;-webkit-text-stroke:0;">访问</span>
<span id="t99" class="a t m" style="left:674.0px;top:293.75px;font-size:13px;line-height:22px;color:#5c6370;letter-spacing:0;">swagger</span>
<span id="t100" class="a t m" style="left:728.6px;top:293.75px;font-size:13px;line-height:22px;color:#5c6370;letter-spacing:0;-webkit-text-stroke:0;">的账号</span>
<span id="t101" class="a t m" style="left:562.2px;top:315.75px;font-size:13px;line-height:22px;color:#ee5a70;letter-spacing:0;">password</span>
<span id="t102" class="a t m" style="left:624.6px;top:315.75px;font-size:13px;line-height:22px;color:#abb2bf;letter-spacing:0;">:</span>
<span id="t103" class="a t m" style="left:640.2px;top:315.75px;font-size:13px;line-height:22px;color:#5c6370;letter-spacing:0;">#</span>
<span id="t104" class="a t m" style="left:648.0px;top:315.75px;font-size:13px;line-height:22px;color:#5c6370;letter-spacing:0;-webkit-text-stroke:0;">访问</span>
<span id="t105" class="a t m" style="left:674.0px;top:315.75px;font-size:13px;line-height:22px;color:#5c6370;letter-spacing:0;">swagger</span>
<span id="t106" class="a t m" style="left:728.6px;top:315.75px;font-size:13px;line-height:22px;color:#5c6370;letter-spacing:0;-webkit-text-stroke:0;">的密码</span>
<span id="t107" class="a t m" style="left:531.0px;top:337.75px;font-size:13px;line-height:22px;color:#5c6370;letter-spacing:0;"># wx-java-tools </span>
<span id="t108" class="a t m" style="left:655.8px;top:337.75px;font-size:13px;line-height:22px;color:#5c6370;letter-spacing:0;-webkit-text-stroke:0;">第三方框架仅仅用到了微信小程序直播功能</span>
<span id="t109" class="a t m" style="left:910.6px;top:337.75px;font-size:13px;line-height:22px;color:#5c6370;letter-spacing:0;-webkit-text-stroke:0;">是用小程序直播时必须配置</span>
<span id="t110" class="a t m" style="left:531.0px;top:359.75px;font-size:13px;line-height:22px;color:#ee5a70;letter-spacing:0;">wx</span>
<span id="t111" class="a t m" style="left:546.6px;top:359.75px;font-size:13px;line-height:22px;color:#abb2bf;letter-spacing:0;">:</span>
<span id="t112" class="a t m" style="left:546.6px;top:381.75px;font-size:13px;line-height:22px;color:#ee5a70;letter-spacing:0;">miniapp</span>
<span id="t113" class="a t m" style="left:601.2px;top:381.75px;font-size:13px;line-height:22px;color:#abb2bf;letter-spacing:0;">:</span>
<span id="t114" class="a t m" style="left:562.2px;top:403.75px;font-size:13px;line-height:22px;color:#ee5a70;letter-spacing:0;">configs</span>
<span id="t115" class="a t m" style="left:616.8px;top:403.75px;font-size:13px;line-height:22px;color:#abb2bf;letter-spacing:0;">:</span>
<span id="t116" class="a t m" style="left:577.8px;top:425.75px;font-size:13px;line-height:22px;color:#abb2bf;letter-spacing:0;">-</span>
<span id="t117" class="a t m" style="left:593.4px;top:425.75px;font-size:13px;line-height:22px;color:#ee5a70;letter-spacing:0;">appid</span>
<span id="t118" class="a t m" style="left:632.4px;top:425.75px;font-size:13px;line-height:22px;color:#abb2bf;letter-spacing:0;">:</span>
<span id="t119" class="a t m" style="left:648.0px;top:425.75px;font-size:13px;line-height:22px;color:#8cc97a;letter-spacing:0;">wx7f</span>
<span id="t120" class="a t m" style="left:741.6px;top:425.75px;font-size:13px;line-height:22px;color:#8cc97a;letter-spacing:0;">f5b777</span>
<span id="t121" class="a t m" style="left:796.2px;top:425.75px;font-size:13px;line-height:22px;color:#5c6370;letter-spacing:0;">#</span>
<span id="t122" class="a t m" style="left:804.0px;top:425.75px;font-size:13px;line-height:22px;color:#5c6370;letter-spacing:0;-webkit-text-stroke:0;">微信小程序的</span>
<span id="t123" class="a t m" style="left:882.0px;top:425.75px;font-size:13px;line-height:22px;color:#5c6370;letter-spacing:0;">appid</span>
<span id="t124" class="a t m" style="left:593.4px;top:447.75px;font-size:13px;line-height:22px;color:#ee5a70;letter-spacing:0;">secret</span>
<span id="t125" class="a t m" style="left:640.2px;top:447.75px;font-size:13px;line-height:22px;color:#abb2bf;letter-spacing:0;">:</span>
<span id="t126" class="a t m" style="left:655.8px;top:447.75px;font-size:13px;line-height:22px;color:#8cc97a;letter-spacing:0;">f8aef</span>
<span id="t127" class="a t m" style="left:866.4px;top:447.75px;font-size:13px;line-height:22px;color:#8cc97a;letter-spacing:0;">fd19a</span>
<span id="t128" class="a t m" style="left:913.2px;top:447.75px;font-size:13px;line-height:22px;color:#5c6370;letter-spacing:0;">#</span>
<span id="t129" class="a t m" style="left:921.0px;top:447.75px;font-size:13px;line-height:22px;color:#5c6370;letter-spacing:0;-webkit-text-stroke:0;">微信小程序的</span>
<span id="t130" class="a t m" style="left:999.0px;top:447.75px;font-size:13px;line-height:22px;color:#5c6370;letter-spacing:0;">Secret</span>
<span id="t131" class="a t m" style="left:593.4px;top:469.75px;font-size:13px;line-height:22px;color:#ee5a70;letter-spacing:0;">token</span>
<span id="t132" class="a t m" style="left:632.4px;top:469.75px;font-size:13px;line-height:22px;color:#abb2bf;letter-spacing:0;">:</span>
<span id="t133" class="a t m" style="left:648.0px;top:469.75px;font-size:13px;line-height:22px;color:#8cc97a;letter-spacing:0;">CrmebJava</span>
<span id="t134" class="a t m" style="left:726.0px;top:469.75px;font-size:13px;line-height:22px;color:#5c6370;letter-spacing:0;">#</span>
<span id="t135" class="a t m" style="left:733.8px;top:469.75px;font-size:13px;line-height:22px;color:#5c6370;letter-spacing:0;-webkit-text-stroke:0;">微信小程序消息服务器配置的</span>
<span id="t136" class="a t m" style="left:902.8px;top:469.75px;font-size:13px;line-height:22px;color:#5c6370;letter-spacing:0;">token</span>
<span id="t137" class="a t m" style="left:593.4px;top:491.75px;font-size:13px;line-height:22px;color:#ee5a70;letter-spacing:0;">aesKey</span>
<span id="t138" class="a t m" style="left:640.2px;top:491.75px;font-size:13px;line-height:22px;color:#abb2bf;letter-spacing:0;">:</span>
<span id="t139" class="a t m" style="left:663.6px;top:491.75px;font-size:13px;line-height:22px;color:#5c6370;letter-spacing:0;">#</span>
<span id="t140" class="a t m" style="left:671.4px;top:491.75px;font-size:13px;line-height:22px;color:#5c6370;letter-spacing:0;-webkit-text-stroke:0;">微信小程序消息服务器配置的</span>
<span id="t141" class="a t m" style="left:840.4px;top:491.75px;font-size:13px;line-height:22px;color:#5c6370;letter-spacing:0;">EncodingAESKey</span>
<span id="t142" class="a t m" style="left:593.4px;top:513.75px;font-size:13px;line-height:22px;color:#ee5a70;letter-spacing:0;">msgDataFormat</span>
<span id="t143" class="a t m" style="left:694.8px;top:513.75px;font-size:13px;line-height:22px;color:#abb2bf;letter-spacing:0;">:</span>
<span id="t144" class="a t m" style="left:710.4px;top:513.75px;font-size:13px;line-height:22px;color:#8cc97a;letter-spacing:0;">JSON</span>
<span id="t145" class="a t m" style="left:562.2px;top:557.75px;font-size:13px;line-height:22px;color:#ee5a70;letter-spacing:0;">config-storage</span>
<span id="t146" class="a t m" style="left:671.4px;top:557.75px;font-size:13px;line-height:22px;color:#abb2bf;letter-spacing:0;">:</span>
<span id="t147" class="a t m" style="left:585.6px;top:579.75px;font-size:13px;line-height:22px;color:#ee5a70;letter-spacing:0;">type</span>
<span id="t148" class="a t m" style="left:616.8px;top:579.75px;font-size:13px;line-height:22px;color:#abb2bf;letter-spacing:0;">:</span>
<span id="t149" class="a t m" style="left:632.4px;top:579.75px;font-size:13px;line-height:22px;color:#ee5a70;letter-spacing:0;">redistemplate</span>
<svg class="a" style="left:562px;top:265px;" width="48" height="4" viewBox="0.00 -0.30 48 4"><path d="M0 2.2 L2 0.4 L4 2.2 L6 0.4 L8 2.2 L10 0.4 L12 2.2 L14 0.4 L16 2.2 L18 0.4 L20 2.2 L22 0.4 L24 2.2 L26 0.4 L28 2.2 L30 0.4 L32 2.2 L34 0.4 L36 2.2 L38 0.4 L40 2.2 L42 0.4 L44 2.2 L46 0.4 L48 2.2" fill="none" stroke="#dc8c0e" stroke-width="1"/></svg>
<svg class="a" style="left:562px;top:287px;" width="40" height="4" viewBox="0.00 -0.30 40 4"><path d="M0 2.2 L2 0.4 L4 2.2 L6 0.4 L8 2.2 L10 0.4 L12 2.2 L14 0.4 L16 2.2 L18 0.4 L20 2.2 L22 0.4 L24 2.2 L26 0.4 L28 2.2 L30 0.4 L32 2.2 L34 0.4 L36 2.2 L38 0.4 L40 2.2" fill="none" stroke="#dc8c0e" stroke-width="1"/></svg>
<svg class="a" style="left:562px;top:309px;" width="63" height="4" viewBox="0.00 -0.30 63 4"><path d="M0 2.2 L2 0.4 L4 2.2 L6 0.4 L8 2.2 L10 0.4 L12 2.2 L14 0.4 L16 2.2 L18 0.4 L20 2.2 L22 0.4 L24 2.2 L26 0.4 L28 2.2 L30 0.4 L32 2.2 L34 0.4 L36 2.2 L38 0.4 L40 2.2 L42 0.4 L44 2.2 L46 0.4 L48 2.2 L50 0.4 L52 2.2 L54 0.4 L56 2.2 L58 0.4 L60 2.2 L62 0.4 L64 2.2" fill="none" stroke="#dc8c0e" stroke-width="1"/></svg>
<svg class="a" style="left:562px;top:331px;" width="63" height="4" viewBox="0.00 -0.30 63 4"><path d="M0 2.2 L2 0.4 L4 2.2 L6 0.4 L8 2.2 L10 0.4 L12 2.2 L14 0.4 L16 2.2 L18 0.4 L20 2.2 L22 0.4 L24 2.2 L26 0.4 L28 2.2 L30 0.4 L32 2.2 L34 0.4 L36 2.2 L38 0.4 L40 2.2 L42 0.4 L44 2.2 L46 0.4 L48 2.2 L50 0.4 L52 2.2 L54 0.4 L56 2.2 L58 0.4 L60 2.2 L62 0.4 L64 2.2" fill="none" stroke="#dc8c0e" stroke-width="1"/></svg>
<svg class="a" style="left:562px;top:419px;" width="56" height="4" viewBox="0.00 -0.30 56 4"><path d="M0 2.2 L2 0.4 L4 2.2 L6 0.4 L8 2.2 L10 0.4 L12 2.2 L14 0.4 L16 2.2 L18 0.4 L20 2.2 L22 0.4 L24 2.2 L26 0.4 L28 2.2 L30 0.4 L32 2.2 L34 0.4 L36 2.2 L38 0.4 L40 2.2 L42 0.4 L44 2.2 L46 0.4 L48 2.2 L50 0.4 L52 2.2 L54 0.4 L56 2.2" fill="none" stroke="#dc8c0e" stroke-width="1"/></svg>
<svg class="a" style="left:521px;top:122px;" width="10" height="12" viewBox="0.00 1.60 10 12"><path d="M0.5 12.3 H8.5 V4.5 L4.5 0.5 L0.5 4.5 Z" fill="#282c34" stroke="#5a6370" stroke-width="1"/><path d="M2.4 7.7 H6.6" stroke="#5a6370" stroke-width="1"/></svg>
<svg class="a" style="left:521px;top:211px;" width="10" height="14" viewBox="0.00 -0.20 10 14"><path d="M0.5 0.5 H8.5 V8.2 L4.5 12.3 L0.5 8.2 Z" fill="#282c34" stroke="#5a6370" stroke-width="1"/><path d="M2.4 5.1 H6.6" stroke="#5a6370" stroke-width="1"/></svg>
<svg class="a" style="left:521px;top:233px;" width="10" height="14" viewBox="0.00 -0.20 10 14"><path d="M0.5 0.5 H8.5 V8.2 L4.5 12.3 L0.5 8.2 Z" fill="#282c34" stroke="#5a6370" stroke-width="1"/><path d="M2.4 5.1 H6.6" stroke="#5a6370" stroke-width="1"/></svg>
<svg class="a" style="left:521px;top:318px;" width="10" height="14" viewBox="0.00 -0.40 10 14"><path d="M0.5 12.3 H8.5 V4.5 L4.5 0.5 L0.5 4.5 Z" fill="#282c34" stroke="#5a6370" stroke-width="1"/><path d="M2.4 7.7 H6.6" stroke="#5a6370" stroke-width="1"/></svg>
<svg class="a" style="left:521px;top:365px;" width="10" height="14" viewBox="0.00 -0.20 10 14"><path d="M0.5 0.5 H8.5 V8.2 L4.5 12.3 L0.5 8.2 Z" fill="#282c34" stroke="#5a6370" stroke-width="1"/><path d="M2.4 5.1 H6.6" stroke="#5a6370" stroke-width="1"/></svg>
<svg class="a" style="left:521px;top:387px;" width="10" height="14" viewBox="0.00 -0.20 10 14"><path d="M0.5 0.5 H8.5 V8.2 L4.5 12.3 L0.5 8.2 Z" fill="#282c34" stroke="#5a6370" stroke-width="1"/><path d="M2.4 5.1 H6.6" stroke="#5a6370" stroke-width="1"/></svg>
<svg class="a" style="left:521px;top:409px;" width="10" height="14" viewBox="0.00 -0.20 10 14"><path d="M0.5 0.5 H8.5 V8.2 L4.5 12.3 L0.5 8.2 Z" fill="#282c34" stroke="#5a6370" stroke-width="1"/><path d="M2.4 5.1 H6.6" stroke="#5a6370" stroke-width="1"/></svg>
<svg class="a" style="left:521px;top:431px;" width="10" height="14" viewBox="0.00 -0.20 10 14"><path d="M0.5 0.5 H8.5 V8.2 L4.5 12.3 L0.5 8.2 Z" fill="#282c34" stroke="#5a6370" stroke-width="1"/><path d="M2.4 5.1 H6.6" stroke="#5a6370" stroke-width="1"/></svg>
<svg class="a" style="left:521px;top:516px;" width="10" height="14" viewBox="0.00 -0.40 10 14"><path d="M0.5 12.3 H8.5 V4.5 L4.5 0.5 L0.5 4.5 Z" fill="#282c34" stroke="#5a6370" stroke-width="1"/><path d="M2.4 7.7 H6.6" stroke="#5a6370" stroke-width="1"/></svg>
<svg class="a" style="left:521px;top:563px;" width="10" height="14" viewBox="0.00 -0.20 10 14"><path d="M0.5 0.5 H8.5 V8.2 L4.5 12.3 L0.5 8.2 Z" fill="#282c34" stroke="#5a6370" stroke-width="1"/><path d="M2.4 5.1 H6.6" stroke="#5a6370" stroke-width="1"/></svg>
<svg class="a" style="left:521px;top:582px;" width="10" height="14" viewBox="0.00 -0.40 10 14"><path d="M0.5 12.3 H8.5 V4.5 L4.5 0.5 L0.5 4.5 Z" fill="#282c34" stroke="#5a6370" stroke-width="1"/><path d="M2.4 7.7 H6.6" stroke="#5a6370" stroke-width="1"/></svg>
<div class="a" style="left:703.2px;top:425.6px;width:7.7px;height:7.7px;background:#80c56c;"></div>
<div class="a" style="left:710.6px;top:425.6px;width:7.7px;height:7.7px;background:#80c56c;"></div>
<div class="a" style="left:718.0px;top:425.6px;width:7.7px;height:7.7px;background:#639f58;"></div>
<div class="a" style="left:725.4px;top:425.6px;width:7.7px;height:7.7px;background:#86cf72;"></div>
<div class="a" style="left:732.8px;top:425.6px;width:7.7px;height:7.7px;background:#3d5c43;"></div>
<div class="a" style="left:695.8px;top:433.0px;width:7.7px;height:7.7px;background:#3d5c43;"></div>
<div class="a" style="left:703.2px;top:433.0px;width:7.7px;height:7.7px;background:#84cb70;"></div>
<div class="a" style="left:710.6px;top:433.0px;width:7.7px;height:7.7px;background:#84cb70;"></div>
<div class="a" style="left:718.0px;top:433.0px;width:7.7px;height:7.7px;background:#69a85c;"></div>
<div class="a" style="left:725.4px;top:433.0px;width:7.7px;height:7.7px;background:#3d5c43;"></div>
<div class="a" style="left:732.8px;top:433.0px;width:7.7px;height:7.7px;background:#33493a;"></div>
<div class="a" style="left:681.0px;top:440.40000000000003px;width:7.7px;height:7.7px;background:#7cc06a;"></div>
<div class="a" style="left:688.4px;top:440.40000000000003px;width:7.7px;height:7.7px;background:#639f58;"></div>
<div class="a" style="left:695.8px;top:440.40000000000003px;width:7.7px;height:7.7px;background:#33493a;"></div>
<div class="a" style="left:703.2px;top:440.40000000000003px;width:7.7px;height:7.7px;background:#80c56c;"></div>
<div class="a" style="left:710.6px;top:440.40000000000003px;width:7.7px;height:7.7px;background:#80c56c;"></div>
<div class="a" style="left:718.0px;top:440.40000000000003px;width:7.7px;height:7.7px;background:#5c9453;"></div>
<div class="a" style="left:725.4px;top:440.40000000000003px;width:7.7px;height:7.7px;background:#33493a;"></div>
<div class="a" style="left:681px;top:433px;width:14.8px;height:3.5px;background:#282c34;"></div>
<div class="a" style="left:681px;top:436.5px;width:14.8px;height:4px;background:#6fae60;"></div>
<div class="a" style="left:692.0px;top:451.8px;width:7.7px;height:7.7px;background:#2d3a36;"></div>
<div class="a" style="left:699.4px;top:451.8px;width:7.7px;height:7.7px;background:#33493a;"></div>
<div class="a" style="left:706.8px;top:451.8px;width:7.7px;height:7.7px;background:#3d5c43;"></div>
<div class="a" style="left:714.2px;top:451.8px;width:7.7px;height:7.7px;background:#33493a;"></div>
<div class="a" style="left:721.6px;top:451.8px;width:7.7px;height:7.7px;background:#3d5c43;"></div>
<div class="a" style="left:729.0px;top:451.8px;width:7.7px;height:7.7px;background:#4f7f4c;"></div>
<div class="a" style="left:736.4px;top:451.8px;width:7.7px;height:7.7px;background:#3d5c43;"></div>
<div class="a" style="left:743.8px;top:451.8px;width:7.7px;height:7.7px;background:#33493a;"></div>
<div class="a" style="left:751.2px;top:451.8px;width:7.7px;height:7.7px;background:#4f7f4c;"></div>
<div class="a" style="left:758.6px;top:451.8px;width:7.7px;height:7.7px;background:#639f58;"></div>
<div class="a" style="left:766.0px;top:451.8px;width:7.7px;height:7.7px;background:#3d5c43;"></div>
<div class="a" style="left:773.4px;top:451.8px;width:7.7px;height:7.7px;background:#33493a;"></div>
<div class="a" style="left:780.8px;top:451.8px;width:7.7px;height:7.7px;background:#2d3a36;"></div>
<div class="a" style="left:788.2px;top:451.8px;width:7.7px;height:7.7px;background:#33493a;"></div>
<div class="a" style="left:795.6px;top:451.8px;width:7.7px;height:7.7px;background:#3d5c43;"></div>
<div class="a" style="left:803.0px;top:451.8px;width:7.7px;height:7.7px;background:#4f7f4c;"></div>
<div class="a" style="left:810.4px;top:451.8px;width:7.7px;height:7.7px;background:#639f58;"></div>
<div class="a" style="left:817.8px;top:451.8px;width:7.7px;height:7.7px;background:#4f7f4c;"></div>
<div class="a" style="left:825.2px;top:451.8px;width:7.7px;height:7.7px;background:#3d5c43;"></div>
<div class="a" style="left:832.6px;top:451.8px;width:7.7px;height:7.7px;background:#639f58;"></div>
<div class="a" style="left:840.0px;top:451.8px;width:7.7px;height:7.7px;background:#33493a;"></div>
<div class="a" style="left:847.4px;top:451.8px;width:7.7px;height:7.7px;background:#2d3a36;"></div>
<div class="a" style="left:854.8px;top:451.8px;width:7.7px;height:7.7px;background:#33493a;"></div>
<div class="a" style="left:692.0px;top:459.2px;width:7.7px;height:7.7px;background:#4f7f4c;"></div>
<div class="a" style="left:699.4px;top:459.2px;width:7.7px;height:7.7px;background:#3d5c43;"></div>
<div class="a" style="left:706.8px;top:459.2px;width:7.7px;height:7.7px;background:#33493a;"></div>
<div class="a" style="left:714.2px;top:459.2px;width:7.7px;height:7.7px;background:#3d5c43;"></div>
<div class="a" style="left:721.6px;top:459.2px;width:7.7px;height:7.7px;background:#33493a;"></div>
<div class="a" style="left:729.0px;top:459.2px;width:7.7px;height:7.7px;background:#3d5c43;"></div>
<div class="a" style="left:736.4px;top:459.2px;width:7.7px;height:7.7px;background:#639f58;"></div>
<div class="a" style="left:743.8px;top:459.2px;width:7.7px;height:7.7px;background:#6aa95d;"></div>
<div class="a" style="left:751.2px;top:459.2px;width:7.7px;height:7.7px;background:#6aa95d;"></div>
<div class="a" style="left:758.6px;top:459.2px;width:7.7px;height:7.7px;background:#4f7f4c;"></div>
<div class="a" style="left:766.0px;top:459.2px;width:7.7px;height:7.7px;background:#33493a;"></div>
<div class="a" style="left:773.4px;top:459.2px;width:7.7px;height:7.7px;background:#3d5c43;"></div>
<div class="a" style="left:780.8px;top:459.2px;width:7.7px;height:7.7px;background:#2d3a36;"></div>
<div class="a" style="left:788.2px;top:459.2px;width:7.7px;height:7.7px;background:#33493a;"></div>
<div class="a" style="left:795.6px;top:459.2px;width:7.7px;height:7.7px;background:#4f7f4c;"></div>
<div class="a" style="left:803.0px;top:459.2px;width:7.7px;height:7.7px;background:#6fb062;"></div>
<div class="a" style="left:810.4px;top:459.2px;width:7.7px;height:7.7px;background:#80c56c;"></div>
<div class="a" style="left:817.8px;top:459.2px;width:7.7px;height:7.7px;background:#80c56c;"></div>
<div class="a" style="left:825.2px;top:459.2px;width:7.7px;height:7.7px;background:#639f58;"></div>
<div class="a" style="left:832.6px;top:459.2px;width:7.7px;height:7.7px;background:#33493a;"></div>
<div class="a" style="left:840.0px;top:459.2px;width:7.7px;height:7.7px;background:#3d5c43;"></div>
<div class="a" style="left:847.4px;top:459.2px;width:7.7px;height:7.7px;background:#4f7f4c;"></div>
<div class="a" style="left:854.8px;top:459.2px;width:7.7px;height:7.7px;background:#33493a;"></div>
<div class="a" style="left:521px;top:367.2px;width:516.3px;height:185.7px;border:4px solid #cf0a14;"></div>
<svg class="a" style="left:1120px;top:129px;" width="13" height="12" viewBox="0.00 0.00 13 12"><path d="M6 0.3 L11.8 10.7 H0.2 Z" fill="#f0a020"/><path d="M6 3.8v3.6M6 8.4v1.3" stroke="#282c34" stroke-width="1.4"/></svg>
<span id="t150" class="a t" style="left:1135px;top:127.20px;font-size:11px;line-height:16px;color:#b4bac5;letter-spacing:-0.375px;">17</span>
<svg class="a" style="left:1153px;top:129px;" width="14" height="14" viewBox="-0.50 0.00 14 14"><path d="M1.5 5.5 L4.8 8.6 L11.5 1.2" fill="none" stroke="#499c54" stroke-width="2"/><path d="M1 10.5 l1.8 1.6 l1.8 -1.6 l1.8 1.6 l1.8 -1.6 l1.8 1.6 l1.8 -1.6" fill="none" stroke="#499c54" stroke-width="0.9"/></svg>
<span id="t151" class="a t" style="left:1169px;top:127.20px;font-size:11px;line-height:16px;color:#b4bac5;letter-spacing:0.875px;">4</span>
<svg class="a" style="left:1186px;top:131px;" width="11" height="8" viewBox="0.00 -0.50 11 8"><path d="M1 5.8 L5 1.5 L9 5.8" fill="none" stroke="#aab2bf" stroke-width="1.3"/></svg>
<svg class="a" style="left:1207px;top:132px;" width="11" height="8" viewBox="0.00 -0.50 11 8"><path d="M1 1.2 L5 5.5 L9 1.2" fill="none" stroke="#aab2bf" stroke-width="1.3"/></svg>
<div class="a" style="left:1210px;top:156px;width:14px;height:2px;background:#f89a0a;"></div>
<div class="a" style="left:1210px;top:160px;width:14px;height:2px;background:#f89a0a;"></div>
<div class="a" style="left:1210px;top:164px;width:14px;height:2px;background:#f89a0a;"></div>
<div class="a" style="left:1210px;top:168px;width:14px;height:2px;background:#f89a0a;"></div>
<div class="a" style="left:1210px;top:172px;width:14px;height:2px;background:#f89a0a;"></div>
<div class="a" style="left:1210px;top:176px;width:14px;height:2px;background:#f89a0a;"></div>
<div class="a" style="left:1210px;top:180px;width:14px;height:2px;background:#f89a0a;"></div>
<div class="a" style="left:1210px;top:188px;width:14px;height:2px;background:#f89a0a;"></div>
<div class="a" style="left:1210px;top:197px;width:14px;height:2px;background:#f89a0a;"></div>
<div class="a" style="left:1210px;top:201px;width:14px;height:2px;background:#f89a0a;"></div>
<div class="a" style="left:1210px;top:205px;width:14px;height:2px;background:#f89a0a;"></div>
<div class="a" style="left:1210px;top:209px;width:14px;height:2px;background:#f89a0a;"></div>
<div class="a" style="left:1213px;top:621px;width:8px;height:109px;background:#4b4d55;border-radius:4px;"></div>
<div class="a" style="left:1210px;top:642px;width:14px;height:2px;background:#f89a0a;"></div>
<div class="a" style="left:1210px;top:646px;width:14px;height:2px;background:#f89a0a;"></div>
<div class="a" style="left:1210px;top:650px;width:14px;height:2px;background:#f89a0a;"></div>
<div class="a" style="left:1210px;top:654px;width:14px;height:2px;background:#f89a0a;"></div>
<div class="a" style="left:1210px;top:670px;width:14px;height:2px;background:#f89a0a;"></div>
<div class="a" style="left:459px;top:732px;width:765px;height:1px;background:#454a55;"></div>
<span id="t152" class="a t" style="left:535px;top:735.70px;font-size:12px;line-height:17px;color:#b4bac5;letter-spacing:0.148px;">Document 1/1</span>
<span id="t153" class="a t" style="left:635px;top:735.70px;font-size:12px;line-height:17px;color:#b4bac5;letter-spacing:0.552px;">crmeb:</span>
<span id="t154" class="a t" style="left:698px;top:735.70px;font-size:12px;line-height:17px;color:#b4bac5;letter-spacing:0.230px;">imagePath:</span>
<span id="t155" class="a t" style="left:785px;top:735.70px;font-size:12px;line-height:17px;color:#b4bac5;letter-spacing:0.418px;">/Users/stivepeim/Doc...</span>
<svg class="a" style="left:621px;top:739px;" width="6" height="9" viewBox="0.00 -0.90 6 9"><path d="M1 1 L4 4 L1 7" fill="none" stroke="#4a5372" stroke-width="1.1"/></svg>
<svg class="a" style="left:684px;top:739px;" width="6" height="9" viewBox="0.00 -0.90 6 9"><path d="M1 1 L4 4 L1 7" fill="none" stroke="#4a5372" stroke-width="1.1"/></svg>
<svg class="a" style="left:771px;top:739px;" width="6" height="9" viewBox="0.00 -0.90 6 9"><path d="M1 1 L4 4 L1 7" fill="none" stroke="#4a5372" stroke-width="1.1"/></svg>
<div class="a" style="left:1224px;top:95px;width:1px;height:659px;background:#363b46;"></div>
<span id="t156" class="a t" style="left:1234.6px;top:101.90px;font-size:16px;line-height:18px;color:#c3c5c9;font-weight:bold;transform:translateX(-50%);font-style:italic;">m</span>
<span id="t157" class="a t" style="left:1235px;top:131.00px;font-size:11px;line-height:16px;color:#abb2bf;letter-spacing:0.294px;transform:translate(-50%,0) rotate(90deg);transform-origin:50% 50%;">Maven</span>
<span id="t158" class="a t" style="left:1235px;top:210.00px;font-size:11px;line-height:16px;color:#abb2bf;letter-spacing:0.238px;transform:translate(-50%,0) rotate(90deg);transform-origin:50% 50%;">Database</span>
<div class="a" style="left:55px;top:754px;width:1190px;height:1px;background:#333842;"></div>
<span id="t159" class="a t" style="left:102.5px;top:757.10px;font-size:11px;line-height:16px;color:#b4bac5;letter-spacing:0.312px;">Git</span>
<span id="t160" class="a t" style="left:153px;top:757.10px;font-size:11px;line-height:16px;color:#b4bac5;letter-spacing:0.105px;">TODO</span>
<span id="t161" class="a t" style="left:222px;top:757.10px;font-size:11px;line-height:16px;color:#b4bac5;letter-spacing:0.379px;">Problems</span>
<span id="t162" class="a t" style="left:309px;top:757.10px;font-size:11px;line-height:16px;color:#b4bac5;letter-spacing:0.395px;">Profiler</span>
<span id="t163" class="a t" style="left:384px;top:757.10px;font-size:11px;line-height:16px;color:#b4bac5;letter-spacing:0.303px;">Terminal</span>
<span id="t164" class="a t" style="left:466px;top:757.10px;font-size:11px;line-height:16px;color:#b4bac5;letter-spacing:0.340px;">Endpoints</span>
<span id="t165" class="a t" style="left:555px;top:757.10px;font-size:11px;line-height:16px;color:#b4bac5;letter-spacing:0.306px;">Build</span>
<span id="t166" class="a t" style="left:619px;top:757.10px;font-size:11px;line-height:16px;color:#b4bac5;letter-spacing:0.388px;">Dependencies</span>
<span id="t167" class="a t" style="left:734px;top:757.10px;font-size:11px;line-height:16px;color:#b4bac5;letter-spacing:0.367px;">Spring</span>
<span id="t168" class="a t" style="left:1162px;top:757.10px;font-size:11px;line-height:16px;color:#b4bac5;letter-spacing:0.273px;">Event Log</span>
<div class="a" style="left:1145px;top:759px;width:13px;height:13px;background:#4ca55a;border-radius:50% 50% 0 50%;"></div>
<span id="t169" class="a t" style="left:1151.4px;top:759.30px;font-size:10px;line-height:12px;color:#f0f2f4;font-weight:bold;transform:translateX(-50%);">3</span>
<div class="a" style="left:55px;top:775px;width:1190px;height:1px;background:#333842;"></div>
<span id="t170" class="a t" style="left:87px;top:778.40px;font-size:11px;line-height:16px;color:#b4bac5;letter-spacing:0.356px;">Pushed dzz_V1.3_dev_20230515 to new branch origin/dzz_V1.3_dev_20230515 (53 minutes ago)</span>
<span id="t171" class="a t" style="left:724px;top:778.40px;font-size:11px;line-height:16px;color:#b4bac5;letter-spacing:0.169px;">11:14 (91 chars)</span>
<span id="t172" class="a t" style="left:818px;top:778.40px;font-size:11px;line-height:16px;color:#b4bac5;letter-spacing:0.078px;">LF</span>
<span id="t173" class="a t" style="left:843px;top:778.40px;font-size:11px;line-height:16px;color:#b4bac5;letter-spacing:0.566px;">UTF-8</span>
<span id="t174" class="a t" style="left:889px;top:778.40px;font-size:11px;line-height:16px;color:#b4bac5;letter-spacing:0.371px;">2 spaces</span>
<span id="t175" class="a t" style="left:965px;top:778.40px;font-size:11px;line-height:16px;color:#b4bac5;letter-spacing:0.296px;">dzz_V1.3_dev_20230515</span>
<div class="a" style="left:1149px;top:776px;width:48px;height:21.5px;background:#6b6b6c;"></div>
<div class="a" style="left:1197px;top:776px;width:10.6px;height:21.5px;background:#5b5b5c;"></div>
<span id="t176" class="a t" style="left:1156px;top:778.40px;font-size:11px;line-height:16px;color:#b4bac5;letter-spacing:0.508px;">1054 of 2048M</span>
<svg class="a" style="left:385px;top:72px;" width="17" height="17" viewBox="-0.50 0.00 17 17"><path d="M14.4 2.2 C14.9 4.5 14.6 7 13.6 9 L8 13.2 C6 14.2 3 13.7 1.6 11.7 C0.4 9.7 1 7.3 4 6.3 C8 5.1 12.4 5.4 14.4 2.2 Z" fill="#4f9c3d"/><path d="M3 14.6 C4.6 14.7 5.8 14.2 6.8 13" fill="none" stroke="#468a36" stroke-width="1"/><path d="M6.20 11.90 L8.58 6.70 H14.42 L16.80 11.90 L14.42 17.10 H8.58 Z" fill="#21252b"/><path d="M7.10 11.90 L9.08 7.60 H13.92 L15.90 11.90 L13.92 16.20 H9.08 Z" fill="#a9b5bf"/><circle cx="11.5" cy="11.9" r="2.45" fill="#21252b"/><path d="M10.40 11.00 A1.55 1.55 0 1 0 12.60 11.00" fill="none" stroke="#a9b5bf" stroke-width="0.85"/><path d="M11.5 9.70 V12.00" stroke="#a9b5bf" stroke-width="0.85"/></svg>
<svg class="a" style="left:90px;top:101px;" width="15" height="15" viewBox="0.00 -0.50 15 15"><rect x="0.5" y="0.5" width="13" height="12.5" fill="none" stroke="#8b93a1" stroke-width="1"/><rect x="0.5" y="0.5" width="13" height="2.5" fill="#8b93a1"/><rect x="2.3" y="4.3" width="9.4" height="7" fill="#3a8fb0"/></svg>
<svg class="a" style="left:353px;top:101px;" width="14" height="15" viewBox="-0.50 0.00 14 15"><rect x="0.3" y="0" width="12.4" height="2" fill="#c0c2c6"/><rect x="0.3" y="12" width="12.4" height="2" fill="#c0c2c6"/><path d="M6.5 3 L9.8 5.8 H3.2 Z M6.5 11 L9.8 8.2 H3.2 Z" fill="#c0c2c6"/></svg>
<svg class="a" style="left:379px;top:101px;" width="14" height="15" viewBox="-0.50 0.00 14 15"><rect x="0.3" y="6" width="12.4" height="2" fill="#c0c2c6"/><path d="M6.5 4.4 L9.8 1 H3.2 Z M6.5 9.6 L9.8 13 H3.2 Z" fill="#c0c2c6"/></svg>
<div class="a" style="left:402.5px;top:98px;width:1px;height:20px;background:#2a2f39;"></div>
<svg class="a" style="left:411px;top:100px;" width="17" height="17" viewBox="0.00 0.00 17 17"><path d="M6.72 3.87 L6.87 2.11 L9.13 2.11 L9.28 3.87 L10.94 4.83 L12.54 4.07 L13.67 6.04 L12.21 7.04 L12.21 8.96 L13.67 9.96 L12.54 11.93 L10.94 11.17 L9.28 12.13 L9.13 13.89 L6.87 13.89 L6.72 12.13 L5.06 11.17 L3.46 11.93 L2.33 9.96 L3.79 8.96 L3.79 7.04 L2.33 6.04 L3.46 4.07 L5.06 4.83 Z" fill="#c0c2c6" stroke="#c0c2c6" stroke-width="0.8" stroke-linejoin="round"/><circle cx="8" cy="8" r="1.98" fill="#323844"/></svg>
<div class="a" style="left:439px;top:107px;width:12.2px;height:2px;background:#c0c2c6;"></div>
<svg class="a" style="left:668px;top:72px;" width="17" height="15" viewBox="0.00 -0.50 17 15"><ellipse cx="11.3" cy="4" rx="2.5" ry="3.3" fill="#a4a7ad"/><path d="M11.5 7.2 C13.6 8.2 15.2 8.8 15.2 10.6 L12.6 10.6 Z" fill="#a4a7ad"/><ellipse cx="6.9" cy="4.8" rx="2.9" ry="3.7" fill="#c0c2c6"/><path d="M0.8 13.3 V11.2 C0.8 9.6 3.6 9.4 5.2 8 H8.6 C10.2 9.4 13.2 9.6 13.2 11.2 V13.3 Z" fill="#c0c2c6"/></svg>
<svg class="a" style="left:685px;top:78px;" width="10" height="6" viewBox="-0.80 -0.80 10 6"><path d="M0 0 H8.4 L4.2 4.4 Z" fill="#c0c2c6"/></svg>
<div class="a" style="left:702px;top:70px;width:1px;height:19.8px;background:#3b3f4a;"></div>
<svg class="a" style="left:710px;top:72px;" width="18" height="17" viewBox="0.00 0.00 18 17"><path d="M0.9 6.4 L6.3 1.1 L10.1 0.8 L9.3 2.6 L3.5 8.2 Z" fill="#4ca55a"/><path d="M5.8 5.6 L8.3 3.4 L16.2 12.2 L13.4 15 Z" fill="#4ca55a"/></svg>
<div class="a" style="left:738px;top:69px;width:107px;height:20.5px;border:1px solid #3f4552;border-radius:4px;"></div>
<svg class="a" style="left:747px;top:72px;" width="16" height="15" viewBox="-0.50 -0.50 16 15"><path d="M2.5 3 V0.8 H14 V10 H12" fill="none" stroke="#4d5461" stroke-width="1"/><rect x="0.8" y="3.6" width="10.6" height="9.4" fill="#2b4b5a" stroke="#5a6170" stroke-width="1"/><rect x="0.8" y="3.6" width="10.6" height="1.6" fill="#5a6170"/></svg>
<span id="t177" class="a t" style="left:767.5px;top:70.70px;font-size:13px;line-height:18px;color:#b9bcc2;letter-spacing:-0.644px;">CrmebUtil</span>
<svg class="a" style="left:827px;top:78px;" width="10" height="6" viewBox="-0.50 -0.20 10 6"><path d="M0 0 H9 L4.5 5 Z" fill="#c0c2c6"/></svg>
<svg class="a" style="left:860px;top:74px;" width="11" height="13" viewBox="0.00 0.00 11 13"><path d="M0 0 L9.8 5.9 L0 11.8 Z" fill="#4ca55a"/></svg>
<svg class="a" style="left:883px;top:72px;" width="15" height="16" viewBox="0.00 -0.50 15 16"><path d="M4.6 3.4 L3.4 0.9 M9.4 3.4 L10.6 0.9" stroke="#4ca55a" stroke-width="1.3" fill="none"/><path d="M1 5.4 L3.4 6.8 M13 5.4 L10.6 6.8 M0.6 9 H3.2 M13.4 9 H10.8 M1 12.8 L3.4 11.4 M13 12.8 L10.6 11.4" stroke="#4ca55a" stroke-width="1.4" fill="none"/><path d="M2.8 8 C2.8 2.6 11.2 2.6 11.2 8 V10 C11.2 15.6 2.8 15.6 2.8 10 Z" fill="#4ca55a"/><path d="M4.4 7.6 H9.6 M4.4 10.6 H9.6" stroke="#21252b" stroke-width="1.2"/></svg>
<svg class="a" style="left:908px;top:73px;" width="18" height="16" viewBox="-0.50 -0.50 18 16"><path d="M0.6 1.4 C2.8 1.4 4.4 1 5.5 0.4 C6.6 1 8.2 1.4 10.4 1.4 V6.2 C10.4 9.4 8 11.2 5.5 12.2 C3 11.2 0.6 9.4 0.6 6.2 Z" fill="#c0c2c6"/><path d="M5.5 2.6 C6.6 2.9 7.6 3 8.8 3 V6.4 C8.8 8.4 7.4 9.6 5.5 10.4 Z" fill="#21252b"/><path d="M7.4 4.6 L16.2 9.9 L7.4 15.2 Z" fill="#21252b"/><path d="M8.5 6 L15.4 10 L8.5 14.2 Z" fill="#4ca55a"/></svg>
<svg class="a" style="left:932px;top:72px;" width="18" height="17" viewBox="-0.50 -0.80 18 17"><circle cx="6.4" cy="6.4" r="5.4" fill="none" stroke="#c0c2c6" stroke-width="1.3"/><path d="M6.4 6.8 L7.8 3.4 M6.4 6.8 L5 8.6" fill="none" stroke="#c0c2c6" stroke-width="1.2"/><path d="M7.4 5.2 L16.4 10.6 L7.4 16 Z" fill="#21252b"/><path d="M8.6 6.7 L15.5 10.7 L8.6 14.9 Z" fill="#4ca55a"/></svg>
<svg class="a" style="left:954px;top:78px;" width="10" height="6" viewBox="-0.80 -0.70 10 6"><path d="M0 0 H8.2 L4.1 4.4 Z" fill="#c0c2c6"/></svg>
<div class="a" style="left:974px;top:75px;width:10px;height:10px;background:#5e5e5e;"></div>
<div class="a" style="left:995px;top:70px;width:1px;height:19.8px;background:#3b3f4a;"></div>
<span id="t178" class="a t" style="left:1005.3px;top:70.70px;font-size:13px;line-height:18px;color:#b9bcc2;letter-spacing:-0.559px;">Git:</span>
<svg class="a" style="left:1035px;top:73px;" width="14" height="14" viewBox="0.00 0.00 14 14"><path d="M11.6 1.4 L3.6 9.6" stroke="#3d9bd6" stroke-width="2.1" fill="none"/><path d="M1 5 V12 H8 Z" fill="#3d9bd6"/></svg>
<svg class="a" style="left:1060px;top:73px;" width="16" height="13" viewBox="0.00 -0.50 16 13"><path d="M1.2 6.8 L5.5 10.8 L13.8 1.2" stroke="#4ca55a" stroke-width="2.3" fill="none"/></svg>
<svg class="a" style="left:1086px;top:73px;" width="14" height="14" viewBox="-0.50 -0.50 14 14"><path d="M1.2 11.8 L9 3.8" stroke="#4ca55a" stroke-width="2.1" fill="none"/><path d="M4.8 1.6 L11.8 1.2 L11.5 8.2 Z" fill="#4ca55a"/></svg>
<svg class="a" style="left:1111px;top:72px;" width="17" height="17" viewBox="0.00 0.00 17 17"><circle cx="8" cy="7.8" r="6.5" fill="none" stroke="#c0c2c6" stroke-width="1.5"/><path d="M8 3.8 V8 L10.4 9.8" fill="none" stroke="#c0c2c6" stroke-width="1.5"/></svg>
<svg class="a" style="left:1139px;top:73px;" width="15" height="15" viewBox="0.00 0.00 15 15"><path d="M0.6 4.6 L4.4 0.8 V8.4 Z" fill="#606266"/><path d="M3.6 4.6 H8.4 C13.6 4.6 13.6 12.4 8.4 12.4 H4.4" fill="none" stroke="#606266" stroke-width="1.7"/></svg>
<div class="a" style="left:1161.3px;top:70px;width:1px;height:19.8px;background:#3b3f4a;"></div>
<svg class="a" style="left:1170px;top:73px;" width="16" height="16" viewBox="-0.50 0.00 16 16"><circle cx="6" cy="6" r="4.6" fill="none" stroke="#c0c2c6" stroke-width="1.8"/><path d="M9.4 9.4 L14 14" stroke="#c0c2c6" stroke-width="2"/></svg>
<svg class="a" style="left:1196px;top:72px;" width="17" height="17" viewBox="0.00 0.00 17 17"><path d="M6.72 3.87 L6.87 2.11 L9.13 2.11 L9.28 3.87 L10.94 4.83 L12.54 4.07 L13.67 6.04 L12.21 7.04 L12.21 8.96 L13.67 9.96 L12.54 11.93 L10.94 11.17 L9.28 12.13 L9.13 13.89 L6.87 13.89 L6.72 12.13 L5.06 11.17 L3.46 11.93 L2.33 9.96 L3.79 8.96 L3.79 7.04 L2.33 6.04 L3.46 4.07 L5.06 4.83 Z" fill="#c0c2c6" stroke="#c0c2c6" stroke-width="0.8" stroke-linejoin="round"/><circle cx="8" cy="8" r="1.98" fill="#21252b"/></svg>
<svg class="a" style="left:1222px;top:72px;" width="17" height="16" viewBox="-0.50 -0.50 17 16"><defs><linearGradient id="cg1" x1="0" y1="0" x2="0.25" y2="1"><stop offset="0.05" stop-color="#f7f23a"/><stop offset="0.5" stop-color="#7fdc7a"/><stop offset="1" stop-color="#12b4e6"/></linearGradient><linearGradient id="cg2" x1="0" y1="0" x2="1" y2="0.5"><stop offset="0" stop-color="#3fd56c"/><stop offset="0.55" stop-color="#1fb7b0"/><stop offset="1" stop-color="#1a8fe8"/></linearGradient><linearGradient id="cg3" x1="1" y1="0" x2="0" y2="1"><stop offset="0" stop-color="#1d55c0"/><stop offset="0.6" stop-color="#1d6fd0"/><stop offset="1" stop-color="#17b4dc"/></linearGradient></defs><path d="M0.6 0.4 C6 0.2 11.5 2.6 14.8 6.4 L8.5 7.2 C6.5 4 3.5 1.6 0.6 0.4 Z" fill="url(#cg2)"/><path d="M14.8 6.4 C12.5 10.5 7.5 14 2.5 14.5 C5.5 12.5 7.5 10 8.5 6.9 Z" fill="url(#cg3)"/><path d="M0.6 0.4 C-0.2 5 0.4 10 2.5 14.5 C5.5 12.5 7.7 10 8.7 6.9 C6.5 4 3.5 1.6 0.6 0.4 Z" fill="url(#cg1)"/></svg>
<svg class="a" style="left:61px;top:147px;" width="12" height="10" viewBox="0.00 0.00 12 10"><path d="M0 0 H4.6 L5.8 1.8 H11.2 V9.2 H0 Z" fill="#c0c2c6"/></svg>
<svg class="a" style="left:59px;top:224px;" width="15" height="10" viewBox="-0.50 -0.50 15 10"><circle cx="7" cy="4.5" r="3.2" fill="none" stroke="#c0c2c6" stroke-width="1.6"/><path d="M0 4.5 H3.6 M10.4 4.5 H14" stroke="#c0c2c6" stroke-width="1.6"/></svg>
<svg class="a" style="left:62px;top:635px;" width="10" height="10" viewBox="0.00 0.00 10 10"><rect x="5.2" y="0" width="4.2" height="4.2" fill="#c0c2c6"/><rect x="0" y="5.2" width="4.2" height="4.2" fill="#c0c2c6"/><rect x="5.2" y="5.2" width="4.2" height="4.2" fill="#c0c2c6"/></svg>
<svg class="a" style="left:62px;top:730px;" width="10" height="12" viewBox="0.00 0.00 10 12"><path d="M0 0 H9.4 V11.4 H0 L4.2 5.7 Z" fill="#c0c2c6"/></svg>
<svg class="a" style="left:1228px;top:175px;" width="13" height="14" viewBox="-0.50 -0.70 13 14"><path d="M0.3 2.6 C0.3 -0.4 11.7 -0.4 11.7 2.6 V10.2 C11.7 13.4 0.3 13.4 0.3 10.2 Z" fill="#c0c2c6"/><path d="M0.3 3.6 C1.6 5.8 10.4 5.8 11.7 3.6 M0.3 6.6 C1.6 8.8 10.4 8.8 11.7 6.6 M0.3 9.4 C1.6 11.6 10.4 11.6 11.7 9.4" fill="none" stroke="#21252b" stroke-width="0.9"/></svg>
<svg class="a" style="left:86px;top:759px;" width="12" height="14" viewBox="0.00 -0.30 12 14"><path d="M2.7 2 V10.6" stroke="#c0c2c6" stroke-width="1.7"/><path d="M8.9 3 V4.2 C8.9 7.6 2.7 6 2.7 9" fill="none" stroke="#c0c2c6" stroke-width="1.6"/><circle cx="2.7" cy="2.3" r="1.6" fill="#c0c2c6"/><circle cx="2.7" cy="10.6" r="1.6" fill="#c0c2c6"/><circle cx="8.9" cy="3.2" r="1.6" fill="#c0c2c6"/></svg>
<svg class="a" style="left:138px;top:761px;" width="11" height="9" viewBox="0.00 0.00 11 9"><path d="M0 1 H2 M0 4.2 H2 M0 7.4 H2" stroke="#c0c2c6" stroke-width="1.8"/><path d="M3.4 1 H10.6 M3.4 4.2 H10.6 M3.4 7.4 H10.6" stroke="#c0c2c6" stroke-width="1.8"/></svg>
<svg class="a" style="left:206px;top:759px;" width="12" height="12" viewBox="0.00 -0.60 12 12"><circle cx="5.5" cy="5.5" r="5.5" fill="#c0c2c6"/><path d="M5.5 2.4 V6.2 M5.5 7.4 V8.8" stroke="#21252b" stroke-width="1.6"/></svg>
<svg class="a" style="left:291px;top:758px;" width="15" height="15" viewBox="0.00 -0.80 15 15"><path d="M10.6 4 A5 5 0 1 0 6 11" fill="none" stroke="#c0c2c6" stroke-width="1.4"/><path d="M6 3.4 V6.4 L4.4 7.6" fill="none" stroke="#c0c2c6" stroke-width="1.2"/><path d="M7 5.6 L13.4 9.6 L7 13.6 Z" fill="#c0c2c6"/><path d="M4.2 0.8 H7.8" stroke="#c0c2c6" stroke-width="1.3"/></svg>
<svg class="a" style="left:367px;top:760px;" width="13" height="11" viewBox="-0.50 0.00 13 11"><rect x="0" y="0" width="11.6" height="10" rx="0.8" fill="#c0c2c6"/><path d="M2 2.6 L4.8 5 L2 7.4" fill="none" stroke="#21252b" stroke-width="1.3"/><path d="M5.8 7.6 H9.4" stroke="#21252b" stroke-width="1.3"/></svg>
<svg class="a" style="left:448px;top:758px;" width="15" height="15" viewBox="0.00 -0.80 15 15"><path d="M3 10.4 L7.4 2.6 L11.6 10.4" fill="none" stroke="#c0c2c6" stroke-width="1.4"/><circle cx="7.4" cy="2.6" r="2.3" fill="#c0c2c6"/><circle cx="2.6" cy="10.6" r="2.5" fill="#c0c2c6"/><circle cx="11.8" cy="10.6" r="2.5" fill="#c0c2c6"/></svg>
<svg class="a" style="left:537px;top:759px;" width="15" height="14" viewBox="-0.50 0.00 15 14"><path d="M0.6 5.4 L5 1 L8.2 0.8 L7.6 2.4 L2.8 7.2 Z" fill="#c0c2c6"/><path d="M4.6 4.4 L6.6 2.6 L13.4 10.6 L11.4 12.6 Z" fill="#c0c2c6"/></svg>
<svg class="a" style="left:602px;top:758px;" width="14" height="15" viewBox="0.00 -0.80 14 15"><path d="M6.5 0.4 L12.6 3.6 L6.5 6.8 L0.4 3.6 Z" fill="#c0c2c6"/><path d="M0.6 6.6 L6.5 9.7 L12.4 6.6 M0.6 9.6 L6.5 12.7 L12.4 9.6" fill="none" stroke="#c0c2c6" stroke-width="1.3"/></svg>
<svg class="a" style="left:717px;top:759px;" width="14" height="12" viewBox="0.00 -0.80 14 12"><path d="M0.4 8.4 C0.4 4.6 3.6 2.6 7.6 2.6 C10 2.6 11.6 1.8 12.6 0.2 C13.8 3.6 13 7 10.6 8.8 C7.6 10.8 2.8 10.6 0.4 8.4 Z" fill="#c0c2c6"/><path d="M0.2 9.6 C3 8.8 7 7.6 10 4.6" fill="none" stroke="#21252b" stroke-width="0.9"/></svg>
<svg class="a" style="left:61px;top:779px;" width="14" height="14" viewBox="-0.50 -0.80 14 14"><rect x="3.1" y="0.6" width="9.2" height="9.1" fill="none" stroke="#c0c2c6" stroke-width="1.1"/><path d="M0.7 2.9 V11.7 H10.3" fill="none" stroke="#c0c2c6" stroke-width="1.1"/></svg>
<svg class="a" style="left:948px;top:779px;" width="12" height="14" viewBox="-0.50 -0.60 12 14"><path d="M2.7 2 V10.6" stroke="#c0c2c6" stroke-width="1.7"/><path d="M8.9 3 V4.2 C8.9 7.6 2.7 6 2.7 9" fill="none" stroke="#c0c2c6" stroke-width="1.6"/><circle cx="2.7" cy="2.3" r="1.6" fill="#c0c2c6"/><circle cx="2.7" cy="10.6" r="1.6" fill="#c0c2c6"/><circle cx="8.9" cy="3.2" r="1.6" fill="#c0c2c6"/></svg>
<svg class="a" style="left:1105px;top:779px;" width="14" height="13" viewBox="-0.50 -0.90 14 13"><path d="M1.4 5.6 V3.4 C1.4 0.4 6.4 0.4 6.4 3.4 V5.6" fill="none" stroke="#c0c2c6" stroke-width="1.5"/><rect x="4.4" y="5.4" width="7.8" height="6" fill="#c0c2c6"/></svg>
<svg class="a" style="left:1129px;top:779px;" width="18" height="15" viewBox="0.00 -0.20 18 15"><path d="M3.4 9.8 C0.2 9.8 0 5.6 3 5.2 C3.2 0.2 10.4 -0.6 11.4 3.8 C14.4 3.6 15 7.6 12.6 8.2 L9.4 9.8 Z" fill="#c0c2c6"/><path d="M5.6 3.8 C5.6 1.6 9 1.6 9 3.8 C9 5 7.4 5 7.4 6.4 M7.4 7.4 V8.4" fill="none" stroke="#21252b" stroke-width="1.2"/><circle cx="12.4" cy="10.4" r="3.6" fill="#21252b"/><path d="M11.74 8.27 L11.81 7.36 L12.99 7.36 L13.06 8.27 L13.92 8.76 L14.74 8.37 L15.33 9.38 L14.58 9.91 L14.58 10.89 L15.33 11.42 L14.74 12.43 L13.92 12.04 L13.06 12.53 L12.99 13.44 L11.81 13.44 L11.74 12.53 L10.88 12.04 L10.06 12.43 L9.47 11.42 L10.22 10.89 L10.22 9.91 L9.47 9.38 L10.06 8.37 L10.88 8.76 Z" fill="#c0c2c6" stroke="#c0c2c6" stroke-width="0.8" stroke-linejoin="round"/><circle cx="12.4" cy="10.4" r="1.02" fill="#21252b"/></svg>
</div></div>
<div id="hl"></div>
</body></html>
